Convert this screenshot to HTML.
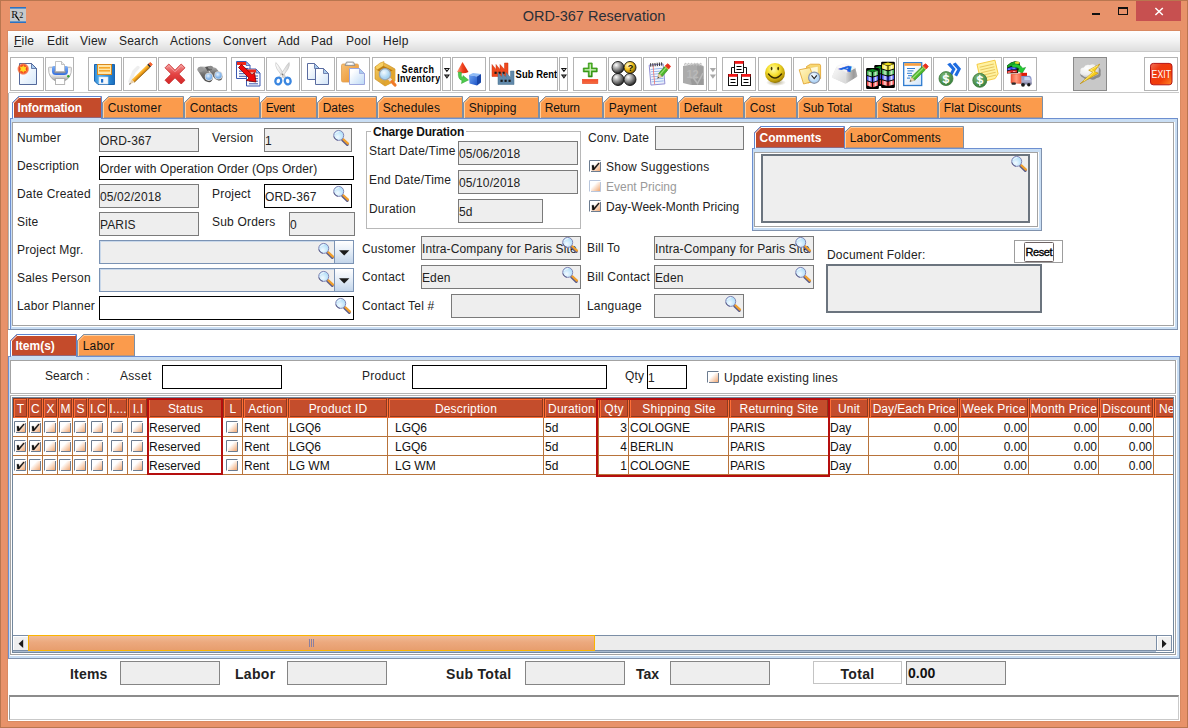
<!DOCTYPE html><html><head><meta charset="utf-8"><title>ORD-367 Reservation</title><style>
*{box-sizing:border-box;margin:0;padding:0}
html,body{width:1188px;height:728px;overflow:hidden;background:#E8926A;font-family:"Liberation Sans",sans-serif;font-size:12px;color:#222}
.a{position:absolute}
#win{position:absolute;left:0;top:0;width:1188px;height:728px;background:#E8926A;border:1px solid #B9764F}
#content{position:absolute;left:8px;top:31px;width:1172px;height:690px;background:#fff;box-shadow:0 0 0 1px #D98A62}
#title{position:absolute;left:0;top:6px;width:1188px;text-align:center;font-size:14.5px;color:#2a2f38;line-height:20px}
#menubar{position:absolute;left:8px;top:31px;width:1172px;height:21px;background:linear-gradient(#ffffff 0%,#f4f4f4 45%,#dedede 100%);border-bottom:1px solid #c9c9c9}
#menubar span{position:absolute;top:3px;font-size:12px;line-height:14px;color:#222;letter-spacing:0.22px}
.tb{position:absolute;top:57px;height:34px;background:#fff;border:1px solid #b4b4b4;overflow:hidden}
.tb svg{position:absolute;left:0;top:0}
.lbl{position:absolute;font-size:12px;line-height:14px;white-space:nowrap;color:#222;letter-spacing:0.2px}
.fd{position:absolute;height:24px;background:#eeeeee;border:1px solid #7a7a7a;font-size:12px;line-height:14px;white-space:nowrap;overflow:hidden;padding:5px 0 0 0;color:#222;letter-spacing:0.12px}
.fe{position:absolute;height:24px;background:#fff;border:1px solid #000;font-size:12px;line-height:14px;white-space:nowrap;overflow:hidden;padding:5px 0 0 0;color:#222;letter-spacing:0.12px}
.tabtxt{position:absolute;font-size:12px;line-height:14px;white-space:nowrap;letter-spacing:0.2px}
.th{position:absolute;top:0;height:20px;background:#C44D2C;color:#fff;letter-spacing:0.2px;font-size:12px;line-height:14px;text-align:center;white-space:nowrap;overflow:hidden;padding-top:3px;border:1px solid;border-color:#8E3A1E #FF6E36 #FF6E36 #8E3A1E;box-shadow:inset -1px 0 0 #8E3A1E, inset 1px 1px 0 #FF6E36, inset 0 -1px 0 #8E3A1E}
.td{position:absolute;height:19px;font-size:12px;line-height:14px;white-space:nowrap;overflow:hidden;padding:3px 0 0 1px;color:#111;border-right:1px solid #B8733A;border-bottom:1px solid #B8733A}
.tot{position:absolute;font-size:14px;font-weight:bold;line-height:16px;color:#222;white-space:nowrap}
</style></head><body>
<div id="win"></div>
<div id="content"></div>
<svg class="a" style="left:10px;top:7px" width="16" height="16"><rect width="16" height="16" fill="#c5c9cc"/><rect width="16" height="1.6" fill="#2a72c4"/><rect y="14.4" width="16" height="1.6" fill="#2a72c4"/><text x="1.2" y="11.2" font-family="Liberation Serif" font-size="10.5" fill="#111">R</text><path d="M5.6 8.6 L9.4 13.6" stroke="#111" stroke-width="1.1"/><text x="9.2" y="11.2" font-family="Liberation Serif" font-size="8" fill="#111">2</text></svg>
<div id="title">ORD-367 Reservation</div>
<div class="a" style="left:1136px;top:1px;width:45px;height:20px;background:#C75050"></div><svg class="a" style="left:1085px;top:0" width="100" height="22"><rect x="7" y="13" width="8" height="2" fill="#111"/><rect x="33.5" y="7.5" width="9" height="7" fill="none" stroke="#111" stroke-width="1"/><rect x="33" y="7" width="10" height="2" fill="#111"/><path d="M70.4 8 L77.8 15 M77.8 8 L70.4 15" stroke="#fff" stroke-width="1.5"/></svg>
<div id="menubar">
<span style="left:6px"><u>F</u>ile</span>
<span style="left:39px">Edit</span>
<span style="left:72px">View</span>
<span style="left:111px">Search</span>
<span style="left:162px">Actions</span>
<span style="left:215px">Convert</span>
<span style="left:270px">Add</span>
<span style="left:303px">Pad</span>
<span style="left:338px">Pool</span>
<span style="left:375px">Help</span>
</div>
<div class="a" style="left:9px;top:92px;width:1170px;height:1px;background:#c8c8c8"></div>
<div class="tb" style="left:10px;width:34px;background:#fff;border-color:#b4b4b4"><svg style="left:-1px;top:-1px" width="34" height="34" viewBox="0 0 34 34"><defs><linearGradient id="pgn" x1="0" y1="0" x2="1" y2="1"><stop offset="0.2" stop-color="#ffffff"/><stop offset="1" stop-color="#D6E8FA"/></linearGradient><radialGradient id="sun"><stop offset="0" stop-color="#FFF14A"/><stop offset="0.3" stop-color="#FFC21A"/><stop offset="0.55" stop-color="#F2401A"/><stop offset="0.8" stop-color="#F4561E" stop-opacity="0.75"/><stop offset="1" stop-color="#F4561E" stop-opacity="0"/></radialGradient></defs><path d="M9.5 6.5 H21.5 L26.5 11.5 V27.5 H9.5 Z" fill="url(#pgn)" stroke="#42588F" stroke-width="0.9" stroke-linejoin="round"/><path d="M21.5 6.5 V11.5 H26.5 Z" fill="#A9CCEE" stroke="#42588F" stroke-width="0.72" stroke-linejoin="round"/><circle cx="13.2" cy="12" r="6.2" fill="url(#sun)"/><path d="M13.2 7.6 L14 10.6 L16.9 9.3 L15.2 12 L16.9 14.7 L14 13.6 L13.2 16.4 L12.4 13.6 L9.5 14.7 L11.2 12 L9.5 9.3 L12.4 10.6 Z" fill="#FFD92A"/></svg></div>
<div class="tb" style="left:45px;width:29px;background:#fff;border-color:#b4b4b4"><svg style="left:-1px;top:-1px" width="29" height="34" viewBox="0 0 29 34"><defs><linearGradient id="prb" x1="0" y1="0" x2="0" y2="1"><stop offset="0" stop-color="#e9e9e9"/><stop offset="0.45" stop-color="#ffffff"/><stop offset="0.8" stop-color="#c4c4c4"/><stop offset="1" stop-color="#8c8c8c"/></linearGradient><linearGradient id="prt" x1="0" y1="0" x2="0" y2="1"><stop offset="0" stop-color="#7FB0F6"/><stop offset="1" stop-color="#2F6CE0"/></linearGradient></defs><path d="M3.6 11.6 Q3 10.4 4.6 10.2 H25.4 Q27 10.4 26.4 11.6 Q26.6 20.5 19.8 23.8 H10.2 Q3.4 20.5 3.6 11.6 Z" fill="url(#prb)" stroke="#9a9a9a" stroke-width="0.7"/><path d="M7 11 Q7 9 9 9 H21 Q23 9 23 11 V14.5 Q23 18 19 18 H11 Q7 18 7 14.5 Z" fill="url(#prt)"/><rect x="9.2" y="13.6" width="11.6" height="2.6" rx="1.2" fill="#8a90a2"/><path d="M10.5 4.5 H16.5 L19.5 7.5 V14.6 H10.5 Z" fill="#ffffff" stroke="#b4b4b4" stroke-width="0.8"/><path d="M16.5 4.5 V7.5 H19.5" fill="#ececec" stroke="#b4b4b4" stroke-width="0.8"/><rect x="10.5" y="21.6" width="9.2" height="5.8" fill="#ffffff" stroke="#a4a4a4" stroke-width="0.8"/><circle cx="23.3" cy="19.3" r="1.2" fill="#2FA22F"/></svg></div>
<div class="tb" style="left:88px;width:34px;background:#fff;border-color:#b4b4b4"><svg style="left:-1px;top:-1px" width="34" height="34" viewBox="0 0 34 34"><defs><linearGradient id="svb" x1="0" y1="0" x2="1" y2="0"><stop offset="0" stop-color="#2C8AD6"/><stop offset="0.25" stop-color="#59B2EE"/><stop offset="0.7" stop-color="#2C8AD6"/><stop offset="1" stop-color="#1A6DBC"/></linearGradient></defs><path d="M6.5 7.5 H26.5 V27.5 H10 L6.5 24 Z" fill="url(#svb)" stroke="#1B64B0" stroke-width="1" stroke-linejoin="round"/><rect x="9.5" y="7.5" width="14" height="10" fill="#FFE6A8" stroke="#D98A1E" stroke-width="1"/><rect x="11" y="10" width="11" height="1.6" fill="#F7A72A"/><rect x="11" y="13" width="11" height="1.6" fill="#F7A72A"/><rect x="11" y="20" width="9" height="7" fill="#f4f8fc" stroke="#c9dcee" stroke-width="0.6"/><rect x="13" y="22" width="2.2" height="3.6" fill="#1F6FCB"/></svg></div>
<div class="tb" style="left:123px;width:34px;background:#fff;border-color:#b4b4b4"><svg style="left:-1px;top:-1px" width="34" height="34" viewBox="0 0 34 34"><defs><linearGradient id="pcl" gradientUnits="userSpaceOnUse" x1="11.9164" y1="19.5171" x2="14.542" y2="22.2642"><stop offset="0" stop-color="#FFC84A"/><stop offset="0.5" stop-color="#F6A51E"/><stop offset="1" stop-color="#B8720A"/></linearGradient></defs><path d="M7 24.5 L11 14.5 L15 10.5" stroke="#cfcfcf" stroke-width="3.5" fill="none" opacity="0.35" stroke-linecap="round"/><path d="M8.66329 22.6263 L11.2888 25.3734 L26.8765 10.4755 L24.251 7.72837 Z" fill="url(#pcl)"/><path d="M11.2888 25.3734 L26.8765 10.4755" stroke="#8A5A08" stroke-width="0.7"/><path d="M8.66329 22.6263 L11.2888 25.3734 L6 27.8 Z" fill="#E8D0AC"/><path d="M6.96219 25.9121 L7.92949 26.9242 L6 27.8 Z" fill="#444"/><path d="M24.251 7.72837 L26.8765 10.4755 L28.1778 9.23178 L25.5522 6.48469 Z" fill="#2c2c2c"/><path d="M25.8286 6.77386 L27.9014 8.94262 L29.209 7.41617 L27.4126 5.53658 Z" fill="#F2622E" stroke="#F2622E" stroke-width="1" stroke-linejoin="round"/></svg></div>
<div class="tb" style="left:158px;width:34px;background:#fff;border-color:#b4b4b4"><svg style="left:-1px;top:-1px" width="34" height="34" viewBox="0 0 34 34"><defs><linearGradient id="dlx" x1="0" y1="0" x2="0" y2="1"><stop offset="0" stop-color="#F29A9A"/><stop offset="0.5" stop-color="#E44444"/><stop offset="1" stop-color="#D32626"/></linearGradient></defs><path d="M7 10.8 L10.8 7 L17 13.2 L23.2 7 L27 10.8 L20.8 17 L27 23.2 L23.2 27 L17 20.8 L10.8 27 L7 23.2 L13.2 17 Z" fill="url(#dlx)" stroke="#C62A2A" stroke-width="0.8" stroke-linejoin="round"/><path d="M8.6 10.8 L10.8 8.6 L17 14.8 L23.2 8.6 L25.4 10.8" fill="none" stroke="#F6B0B0" stroke-width="0.9" opacity="0.8"/></svg></div>
<div class="tb" style="left:193px;width:34px;background:#fff;border-color:#b4b4b4"><svg style="left:-1px;top:-1px" width="34" height="34" viewBox="0 0 34 34"><defs><linearGradient id="bnb" x1="0" y1="0" x2="0" y2="1"><stop offset="0" stop-color="#b8b8b8"/><stop offset="0.5" stop-color="#6e6e6e"/><stop offset="1" stop-color="#4a4a4a"/></linearGradient><radialGradient id="bnl" cx="0.4" cy="0.35"><stop offset="0" stop-color="#E6F3FF"/><stop offset="1" stop-color="#7FB2EA"/></radialGradient></defs><path d="M4.5 13 Q5 9.5 9 9.5 L13 9.8 L20 21 Q19 26 15 25 Q11 24 9.5 21 Z" fill="url(#bnb)"/><path d="M13 9.5 Q15 8.5 18 9.5 L23 11 L29.5 19 Q29.5 24 25.5 23.5 Q22 23 20.5 20 L15 12 Z" fill="url(#bnb)"/><path d="M12 10 L17 9.5 L19 13 L14.5 14 Z" fill="#555"/><ellipse cx="7.5" cy="12.3" rx="3" ry="2.6" fill="#9a9a9a"/><ellipse cx="17.5" cy="10.6" rx="2.6" ry="1.8" fill="#8a8a8a"/><circle cx="15.9" cy="19.8" r="4.1" fill="#d9d9d9"/><circle cx="15.9" cy="19.8" r="3.3" fill="url(#bnl)"/><circle cx="25.4" cy="18.4" r="4.1" fill="#d9d9d9"/><circle cx="25.4" cy="18.4" r="3.3" fill="url(#bnl)"/></svg></div>
<div class="tb" style="left:231px;width:34px;background:#fff;border-color:#b4b4b4"><svg style="left:-1px;top:-1px" width="34" height="34" viewBox="0 0 34 34"><defs><linearGradient id="ca1" x1="0" y1="0" x2="1" y2="1"><stop offset="0.2" stop-color="#ffffff"/><stop offset="1" stop-color="#F6F9FE"/></linearGradient><linearGradient id="ca2" x1="0" y1="0" x2="1" y2="1"><stop offset="0.2" stop-color="#ffffff"/><stop offset="1" stop-color="#F6F9FE"/></linearGradient></defs><path d="M5.5 4.5 H15 L19 8.5 V21.5 H5.5 Z" fill="url(#ca1)" stroke="#3D59B0" stroke-width="1" stroke-linejoin="round"/><path d="M15 4.5 V8.5 H19 Z" fill="#A9CCEE" stroke="#3D59B0" stroke-width="0.8" stroke-linejoin="round"/><rect x="6" y="5" width="9" height="3" fill="#F02818"/><rect x="8" y="11" width="9" height="1" fill="#3D59B0"/><rect x="8" y="13.6" width="9" height="1" fill="#3D59B0"/><rect x="8" y="16.2" width="9" height="1" fill="#3D59B0"/><rect x="8" y="18.8" width="9" height="1" fill="#3D59B0"/><path d="M15.5 12 H25 L29 16 V29 H15.5 Z" fill="url(#ca2)" stroke="#3D59B0" stroke-width="1" stroke-linejoin="round"/><path d="M25 12 V16 H29 Z" fill="#A9CCEE" stroke="#3D59B0" stroke-width="0.8" stroke-linejoin="round"/><rect x="16" y="12.5" width="9" height="3" fill="#F02818"/><rect x="18" y="18.5" width="9" height="1" fill="#3D59B0"/><rect x="18" y="21.1" width="9" height="1" fill="#3D59B0"/><rect x="18" y="23.7" width="9" height="1" fill="#3D59B0"/><rect x="18" y="26.3" width="9" height="1" fill="#3D59B0"/><path d="M7.5 10.5 L10.5 7.5 L21 17.5 L23.5 15.5 L25 25 L15.5 23.5 L18 21 Z" fill="#EE0A0A" stroke="#7a0000" stroke-width="0.8" stroke-linejoin="round"/></svg></div>
<div class="tb" style="left:266px;width:34px;background:#fff;border-color:#b4b4b4"><svg style="left:-1px;top:-1px" width="34" height="34" viewBox="0 0 34 34"><defs><linearGradient id="scb" x1="0" y1="0" x2="1" y2="0"><stop offset="0" stop-color="#ffffff"/><stop offset="1" stop-color="#d2d2d2"/></linearGradient></defs><path d="M9.8 5.5 Q9 8 11 12 L17.5 21 L19.5 19.5 L12 8 Q10.6 6 9.8 5.5 Z" fill="url(#scb)" stroke="#b0b0b0" stroke-width="0.5"/><path d="M23.2 5.5 Q24 8 22 12 L15.5 21 L13.5 19.5 L21 8 Q22.4 6 23.2 5.5 Z" fill="url(#scb)" stroke="#b0b0b0" stroke-width="0.5"/><circle cx="16.5" cy="17.5" r="0.9" fill="#777"/><ellipse cx="12.3" cy="24" rx="2.9" ry="3.4" fill="none" stroke="#3A86E0" stroke-width="2.3" transform="rotate(18 12.3 24)"/><ellipse cx="21.7" cy="24" rx="2.9" ry="3.4" fill="none" stroke="#3A86E0" stroke-width="2.3" transform="rotate(-18 21.7 24)"/></svg></div>
<div class="tb" style="left:301px;width:34px;background:#fff;border-color:#b4b4b4"><svg style="left:-1px;top:-1px" width="34" height="34" viewBox="0 0 34 34"><defs><linearGradient id="cp1" x1="0" y1="0" x2="1" y2="1"><stop offset="0.2" stop-color="#ffffff"/><stop offset="1" stop-color="#CFE3F7"/></linearGradient><linearGradient id="cp2" x1="0" y1="0" x2="1" y2="1"><stop offset="0.2" stop-color="#ffffff"/><stop offset="1" stop-color="#CFE3F7"/></linearGradient></defs><path d="M6.5 6.5 H13.5 L18.5 11.5 V22.5 H6.5 Z" fill="url(#cp1)" stroke="#5A6CA0" stroke-width="1" stroke-linejoin="round"/><path d="M13.5 6.5 V11.5 H18.5 Z" fill="#A9CCEE" stroke="#5A6CA0" stroke-width="0.8" stroke-linejoin="round"/><path d="M14.5 11.5 H22.5 L27.5 16.5 V27.5 H14.5 Z" fill="url(#cp2)" stroke="#5A6CA0" stroke-width="1" stroke-linejoin="round"/><path d="M22.5 11.5 V16.5 H27.5 Z" fill="#A9CCEE" stroke="#5A6CA0" stroke-width="0.8" stroke-linejoin="round"/></svg></div>
<div class="tb" style="left:336px;width:34px;background:#fff;border-color:#b4b4b4"><svg style="left:-1px;top:-1px" width="34" height="34" viewBox="0 0 34 34"><defs><linearGradient id="psb" x1="0" y1="0" x2="1" y2="1"><stop offset="0" stop-color="#F8C074"/><stop offset="1" stop-color="#E8902C"/></linearGradient><linearGradient id="ps2" x1="0" y1="0" x2="1" y2="1"><stop offset="0.2" stop-color="#ffffff"/><stop offset="1" stop-color="#BCD9F6"/></linearGradient></defs><rect x="5.5" y="7" width="17" height="18" rx="1.5" fill="url(#psb)" stroke="#E0A050" stroke-width="0.8"/><path d="M9 8.5 L10.5 5 H17.5 L19 8.5 Z" fill="#d8d8d8" stroke="#8d8d8d" stroke-width="0.8"/><rect x="11.5" y="6" width="5" height="1.6" fill="#fff"/><path d="M13.5 11.5 H23.5 L28.5 16.5 V27.5 H13.5 Z" fill="url(#ps2)" stroke="#9BA6DE" stroke-width="1" stroke-linejoin="round"/><path d="M23.5 11.5 V16.5 H28.5 Z" fill="#A9CCEE" stroke="#9BA6DE" stroke-width="0.8" stroke-linejoin="round"/></svg></div>
<div class="tb" style="left:372px;width:69px;background:#fff;border-color:#b4b4b4"><svg style="left:-1px;top:-1px" width="69" height="34" viewBox="0 0 69 34"><defs><linearGradient id="sib" x1="0" y1="0" x2="1" y2="1"><stop offset="0" stop-color="#F6CC62"/><stop offset="1" stop-color="#CE8E1A"/></linearGradient><radialGradient id="sil" cx="0.4" cy="0.35"><stop offset="0" stop-color="#F4FBFF"/><stop offset="1" stop-color="#A8D4F2"/></radialGradient></defs><path d="M3 10 L11 5.5 L17 8.5 L23 12 V24 L13 29 L3 22 Z" fill="url(#sib)" stroke="#C98A18" stroke-width="0.6"/><path d="M3 10 L8 6 L12 4.5 L11.5 9 L5 13 Z" fill="#F7CF62" stroke="#C98A18" stroke-width="0.5"/><path d="M5 13 L11.5 9 L21 13.5 L13 18 Z" fill="#B97A10"/><path d="M13 18 L23 12 V24 L13 29 Z" fill="#E2A62E"/><path d="M17.5 22 L23 28" stroke="#F07A28" stroke-width="3.2" stroke-linecap="round"/><path d="M16.8 21.3 L19 23.6" stroke="#e8e0d8" stroke-width="3"/><circle cx="13" cy="17.2" r="5.6" fill="url(#sil)" stroke="#9aa6b2" stroke-width="1.3"/><text transform="translate(29.6 16) scale(0.86 1)" font-family="Liberation Sans" font-weight="bold" font-size="10.4" fill="#000" letter-spacing="0.6">Search</text><text transform="translate(25.2 25) scale(0.86 1)" font-family="Liberation Sans" font-weight="bold" font-size="10.4" fill="#000" letter-spacing="0.4">Inventory</text></svg></div>
<div class="tb" style="left:442px;width:9px;background:#fff;border-color:#b4b4b4"><svg style="left:-1px;top:-1px" width="9" height="34" viewBox="0 0 9 34"><path d="M1.8 11 H8 L4.9 15.2 Z" fill="#111"/><path d="M1.8 17.5 H8 L4.9 21.7 Z" fill="#111"/><rect x="3.8" y="12" width="2.2" height="1" fill="#fff" opacity="0.7"/><rect x="3.8" y="18.5" width="2.2" height="1" fill="#fff" opacity="0.5"/></svg></div>
<div class="tb" style="left:452px;width:34px;background:#fff;border-color:#b4b4b4"><svg style="left:-1px;top:-1px" width="34" height="34" viewBox="0 0 34 34"><defs><linearGradient id="shc" x1="0" y1="0" x2="1" y2="0"><stop offset="0" stop-color="#FF9A7A"/><stop offset="0.5" stop-color="#F0401C"/><stop offset="1" stop-color="#C82408"/></linearGradient><linearGradient id="shq" x1="0" y1="0" x2="1" y2="1"><stop offset="0" stop-color="#6FA4F0"/><stop offset="1" stop-color="#1E55C8"/></linearGradient></defs><path d="M10.5 5 L16.5 15 Q11 17.5 5 15 Z" fill="url(#shc)"/><path d="M6.5 15 Q5.5 22 10 23.5 L9.5 26.5 L16.5 23 L11 18.5 L10.8 20.8 Q8.5 19.5 9.5 15.5 Z" fill="#4CCB4C" stroke="#2FA02F" stroke-width="0.5"/><path d="M17 18 L21 16 L29 17 L25 19.5 Z" fill="#8FBBF6"/><path d="M17 18 L25 19.5 V28.5 L17.5 26.5 Z" fill="url(#shq)"/><path d="M25 19.5 L29 17 V25.5 L25 28.5 Z" fill="#1846A8"/></svg></div>
<div class="tb" style="left:489px;width:69px;background:#fff;border-color:#b4b4b4"><svg style="left:-1px;top:-1px" width="69" height="34" viewBox="0 0 69 34"><path d="M3 19.5 V7.5 L7 12.5 V7.5 L11 12.5 V7.5 L15.5 12.5 V6 H19 V19.5 Z" fill="#F0481C" stroke="#C83010" stroke-width="0.5"/><rect x="5.5" y="14.7" width="2.2" height="2.2" fill="#1a1a1a"/><rect x="9.5" y="14.7" width="2.2" height="2.2" fill="#1a1a1a"/><rect x="13.5" y="14.7" width="2.2" height="2.2" fill="#1a1a1a"/><path d="M9 27.5 V15.5 L13 20.5 V15.5 L17 20.5 V15.5 L21.5 20.5 V14 H25 V27.5 Z" fill="#6189AA" stroke="#46708E" stroke-width="0.5"/><rect x="11.5" y="22.7" width="2.2" height="2.2" fill="#1a1a1a"/><rect x="15.5" y="22.7" width="2.2" height="2.2" fill="#1a1a1a"/><rect x="19.5" y="22.7" width="2.2" height="2.2" fill="#1a1a1a"/><text transform="translate(26.6 21) scale(0.9 1)" font-family="Liberation Sans" font-weight="bold" font-size="10.4" fill="#000" letter-spacing="0.1">Sub Rent</text></svg></div>
<div class="tb" style="left:559px;width:9px;background:#fff;border-color:#b4b4b4"><svg style="left:-1px;top:-1px" width="9" height="34" viewBox="0 0 9 34"><path d="M1.8 11 H8 L4.9 15.2 Z" fill="#111"/><path d="M1.8 17.5 H8 L4.9 21.7 Z" fill="#111"/><rect x="3.8" y="12" width="2.2" height="1" fill="#fff" opacity="0.7"/><rect x="3.8" y="18.5" width="2.2" height="1" fill="#fff" opacity="0.5"/></svg></div>
<div class="tb" style="left:573px;width:34px;background:#fff;border-color:#b4b4b4"><svg style="left:-1px;top:-1px" width="34" height="34" viewBox="0 0 34 34"><defs><linearGradient id="plg" x1="0" y1="0" x2="0" y2="1"><stop offset="0" stop-color="#5CC22C"/><stop offset="1" stop-color="#2E9410"/></linearGradient><linearGradient id="plr" x1="0" y1="0" x2="0" y2="1"><stop offset="0" stop-color="#F84A2A"/><stop offset="1" stop-color="#F07040"/></linearGradient></defs><path d="M15.3 6 H19.2 V11 H24.2 V14.9 H19.2 V19.9 H15.3 V14.9 H10.3 V11 H15.3 Z" fill="url(#plg)" stroke="#2C8A10" stroke-width="0.7"/><path d="M16.6 7.3 H17.9 V12.3 H22.9 V13.6 H17.9 V18.6 H16.6 V13.6 H11.6 V12.3 H16.6 Z" fill="#E6F7DA" opacity="0.9"/><rect x="9.3" y="22.3" width="15.6" height="4.4" fill="url(#plr)" stroke="#E83C1C" stroke-width="0.5"/></svg></div>
<div class="tb" style="left:608px;width:34px;background:#fff;border-color:#b4b4b4"><svg style="left:-1px;top:-1px" width="34" height="34" viewBox="0 0 34 34"><defs><radialGradient id="cig" cx="0.35" cy="0.3" r="0.75"><stop offset="0" stop-color="#ffffff"/><stop offset="0.45" stop-color="#9a9a9a"/><stop offset="1" stop-color="#1c1c1c"/></radialGradient><radialGradient id="ciy" cx="0.35" cy="0.3" r="0.75"><stop offset="0" stop-color="#FFFAD0"/><stop offset="0.5" stop-color="#F6C21A"/><stop offset="1" stop-color="#7A5A00"/></radialGradient></defs><circle cx="10" cy="10.5" r="6" fill="url(#cig)" stroke="#111" stroke-width="0.9"/><circle cx="22" cy="10.5" r="6" fill="url(#ciy)" stroke="#111" stroke-width="0.9"/><circle cx="10" cy="22.5" r="6" fill="url(#cig)" stroke="#111" stroke-width="0.9"/><circle cx="22" cy="22.5" r="6" fill="url(#cig)" stroke="#111" stroke-width="0.9"/><text x="19.7" y="14" font-family="Liberation Sans" font-weight="bold" font-size="9" fill="#111">?</text></svg></div>
<div class="tb" style="left:643px;width:34px;background:#fff;border-color:#b4b4b4"><svg style="left:-1px;top:-1px" width="34" height="34" viewBox="0 0 34 34"><defs><linearGradient id="npg" x1="0" y1="0" x2="1" y2="1"><stop offset="0" stop-color="#ffffff"/><stop offset="1" stop-color="#E4ECFA"/></linearGradient></defs><g transform="rotate(-5 14 17)"><rect x="7" y="7.5" width="14" height="20" fill="url(#npg)" stroke="#8A86D0" stroke-width="0.9"/><rect x="8" y="11.5" width="12" height="0.7" fill="#7FA8E8"/><rect x="8" y="14" width="12" height="0.7" fill="#7FA8E8"/><rect x="8" y="16.5" width="12" height="0.7" fill="#7FA8E8"/><rect x="8" y="19" width="12" height="0.7" fill="#7FA8E8"/><rect x="8" y="21.5" width="12" height="0.7" fill="#7FA8E8"/><rect x="8" y="24" width="12" height="0.7" fill="#7FA8E8"/><rect x="10.4" y="8" width="0.8" height="19" fill="#F07070"/><rect x="8" y="5.8" width="1" height="3.4" fill="#333"/><rect x="10.2" y="5.8" width="1" height="3.4" fill="#333"/><rect x="12.4" y="5.8" width="1" height="3.4" fill="#333"/><rect x="14.6" y="5.8" width="1" height="3.4" fill="#333"/><rect x="16.8" y="5.8" width="1" height="3.4" fill="#333"/><rect x="19" y="5.8" width="1" height="3.4" fill="#333"/></g><path d="M15.6823 16.5865 L19.1749 19.5802 L24.9923 12.7931 L21.4998 9.79946 Z" fill="#4DB82A" stroke="#2E7E14" stroke-width="0.6"/><path d="M16.973 17.6929 L22.7905 10.9058" stroke="#9CE07A" stroke-width="1.1"/><path d="M15.6823 16.5865 L19.1749 19.5802 L14.5 21.5 Z" fill="#F0D8A8" stroke="#a08050" stroke-width="0.4"/><path d="M15.1399 19.6778 L16.2029 20.5889 L14.5 21.5 Z" fill="#333"/><path d="M21.4998 9.79946 L24.9923 12.7931 L25.9034 11.7301 L22.4109 8.7365 Z" fill="#D8B040"/><path d="M22.4109 8.7365 L25.9034 11.7301 L27.4762 9.12698 L24.7429 6.78413 Z" fill="#E8301C" stroke="#E8301C" stroke-width="0.9" stroke-linejoin="round"/></svg></div>
<div class="tb" style="left:678px;width:29px;background:#fff;border-color:#b4b4b4"><svg style="left:-1px;top:-1px" width="29" height="34" viewBox="0 0 29 34"><path d="M5 9 L19 6.5 L25.5 9 V28 H13 L5 26 Z" fill="#ababab"/><path d="M19 9 L25.5 9.5 V28 H19 Z" fill="#a0a0a0"/><path d="M12.5 22 H25.5 V28 H14 Z" fill="#9a9a9a"/><path d="M6.5 8.5 Q7 5 8.5 7.5" fill="none" stroke="#c4c4c4" stroke-width="1.2"/><path d="M9.5 8.5 Q10 5 11.5 7.5" fill="none" stroke="#c4c4c4" stroke-width="1.2"/><path d="M12.5 8.5 Q13 5 14.5 7.5" fill="none" stroke="#c4c4c4" stroke-width="1.2"/><path d="M15.5 8.5 Q16 5 17.5 7.5" fill="none" stroke="#c4c4c4" stroke-width="1.2"/><path d="M18.5 8.5 Q19 5 20.5 7.5" fill="none" stroke="#c4c4c4" stroke-width="1.2"/><path d="M21.5 8.5 Q22 5 23.5 7.5" fill="none" stroke="#c4c4c4" stroke-width="1.2"/><text x="8.5" y="21" font-family="Liberation Sans" font-weight="bold" font-size="11" fill="#b9b9b9">12</text><path d="M15.5 21 L19.5 26.5 L25 16" fill="none" stroke="#b9b9b9" stroke-width="1.6"/></svg></div>
<div class="tb" style="left:708px;width:9px;background:#fff;border-color:#b4b4b4"><svg style="left:-1px;top:-1px" width="9" height="34" viewBox="0 0 9 34"><path d="M1.8 11 H8 L4.9 15.2 Z" fill="#a9a9a9"/><path d="M1.8 17.5 H8 L4.9 21.7 Z" fill="#a9a9a9"/></svg></div>
<div class="tb" style="left:722px;width:34px;background:#fff;border-color:#b4b4b4"><svg style="left:-1px;top:-1px" width="34" height="34" viewBox="0 0 34 34"><path d="M12.5 10.5 H9.5 V18 M21.5 10.5 H24.5 V18" fill="none" stroke="#111" stroke-width="1"/><rect x="12.5" y="4.5" width="9" height="11" fill="#fff" stroke="#111" stroke-width="1"/><rect x="12.5" y="4" width="9" height="2.8" fill="#F01818"/><rect x="14.5" y="9" width="5" height="1" fill="#000"/><rect x="14.5" y="12" width="5" height="1" fill="#000"/><rect x="6.5" y="17.5" width="9" height="11" fill="#fff" stroke="#111" stroke-width="1"/><rect x="6.5" y="17" width="9" height="2.8" fill="#F01818"/><rect x="8.5" y="22" width="5" height="1" fill="#000"/><rect x="8.5" y="25" width="5" height="1" fill="#000"/><rect x="19.5" y="17.5" width="9" height="11" fill="#fff" stroke="#111" stroke-width="1"/><rect x="19.5" y="17" width="9" height="2.8" fill="#F01818"/><rect x="21.5" y="22" width="5" height="1" fill="#000"/><rect x="21.5" y="25" width="5" height="1" fill="#000"/></svg></div>
<div class="tb" style="left:758px;width:34px;background:#fff;border-color:#b4b4b4"><svg style="left:-1px;top:-1px" width="34" height="34" viewBox="0 0 34 34"><defs><radialGradient id="smg" cx="0.42" cy="0.32" r="0.75"><stop offset="0" stop-color="#FFFDB0"/><stop offset="0.4" stop-color="#F6E030"/><stop offset="0.78" stop-color="#BC9A08"/><stop offset="1" stop-color="#6E5800"/></radialGradient><radialGradient id="smsh"><stop offset="0" stop-color="#6a5a20" stop-opacity="0.55"/><stop offset="1" stop-color="#6a5a20" stop-opacity="0"/></radialGradient></defs><ellipse cx="18" cy="25.5" rx="10" ry="3.5" fill="url(#smsh)"/><circle cx="17" cy="16" r="10" fill="url(#smg)"/><ellipse cx="13.6" cy="11.6" rx="0.9" ry="1.8" fill="#4a3c00"/><ellipse cx="20.2" cy="11.6" rx="0.9" ry="1.8" fill="#4a3c00"/><path d="M10.5 17 Q17 25 23.5 17" fill="none" stroke="#3a2e00" stroke-width="1.5" stroke-linecap="round"/></svg></div>
<div class="tb" style="left:793px;width:34px;background:#fff;border-color:#b4b4b4"><svg style="left:-1px;top:-1px" width="34" height="34" viewBox="0 0 34 34"><defs><linearGradient id="fog" x1="0" y1="0" x2="1" y2="1"><stop offset="0" stop-color="#FFF8CC"/><stop offset="1" stop-color="#F8D464"/></linearGradient><radialGradient id="fcl" cx="0.4" cy="0.35"><stop offset="0" stop-color="#ffffff"/><stop offset="1" stop-color="#B4D6F6"/></radialGradient></defs><path d="M13.5 9.5 L17.5 7.2 H26 Q27.6 7.2 27.6 8.8 V21.5 L15 26 Z" fill="#F8D870" stroke="#E0A028" stroke-width="0.8"/><path d="M12.5 11.5 L25.2 9.2 V22.5 L14 26 Z" fill="#FFF9D8" stroke="#EAC458" stroke-width="0.5"/><path d="M6.2 12.8 L16 10.8 Q17 10.7 17.3 11.6 L21.6 24 L10.6 27 Z" fill="url(#fog)" stroke="#E0A028" stroke-width="0.8"/><circle cx="21.2" cy="20.7" r="5.6" fill="url(#fcl)" stroke="#8a94a8" stroke-width="1.2"/><path d="M18.5 18.3 L21.2 21.6 L23.8 18.3" fill="none" stroke="#222" stroke-width="1.1"/></svg></div>
<div class="tb" style="left:828px;width:34px;background:#fff;border-color:#b4b4b4"><svg style="left:-1px;top:-1px" width="34" height="34" viewBox="0 0 34 34"><defs><linearGradient id="kyt" x1="0" y1="0" x2="1" y2="1"><stop offset="0" stop-color="#ffffff"/><stop offset="1" stop-color="#f0f0f0"/></linearGradient><linearGradient id="kyl" x1="0" y1="0" x2="1" y2="1"><stop offset="0" stop-color="#fbfbfb"/><stop offset="1" stop-color="#d6d6d6"/></linearGradient><linearGradient id="kyr" x1="0" y1="0" x2="1" y2="0"><stop offset="0" stop-color="#dcdcdc"/><stop offset="0.7" stop-color="#9a9a9a"/><stop offset="1" stop-color="#b4b4b4"/></linearGradient></defs><path d="M8.3 10.2 L4.2 19.3 Q4 20.3 5 20.9 L16.4 26.3 Q17.4 26.8 18.4 26.3 L28.6 20 Q29.6 19.3 29.2 18.4 L27.3 10.9 Z" fill="#e0e0e0"/><path d="M8.3 10.2 L18.6 15.5 L17.4 26.6 L5 20.9 Q4 20.3 4.2 19.3 Z" fill="url(#kyl)"/><path d="M18.6 15.5 L27.3 10.9 L29.2 18.4 Q29.6 19.3 28.6 20 L18.4 26.3 Q17.9 26.6 17.4 26.6 Z" fill="url(#kyr)"/><path d="M8.3 10.2 Q8.6 9.6 9.4 9.2 L15 7 Q16 6.7 17 7 L26.4 10.1 Q27.2 10.4 27.3 10.9 L18.6 15.5 Z" fill="url(#kyt)" stroke="#ececec" stroke-width="0.5"/><g transform="translate(16.3 13.4) rotate(14) skewX(-38) scale(1.7 0.78)"><text x="0" y="0" text-anchor="middle" font-family="Liberation Sans" font-weight="bold" font-size="10" fill="#1560E0" stroke="#1560E0" stroke-width="0.5">A</text></g></svg></div>
<div class="tb" style="left:863px;width:34px;background:#fff;border-color:#b4b4b4"><svg style="left:-1px;top:-1px" width="34" height="34" viewBox="0 0 34 34"><defs><linearGradient id="cm0" x1="0" y1="0" x2="1" y2="0"><stop offset="0" stop-color="#22A03A"/><stop offset="0.55" stop-color="#C8F0C8"/><stop offset="1" stop-color="#22A03A"/></linearGradient><linearGradient id="cm1" x1="0" y1="0" x2="1" y2="0"><stop offset="0" stop-color="#2A38E8"/><stop offset="0.55" stop-color="#D8DCFF"/><stop offset="1" stop-color="#2A38E8"/></linearGradient><linearGradient id="cm2" x1="0" y1="0" x2="1" y2="0"><stop offset="0" stop-color="#F02A2A"/><stop offset="0.55" stop-color="#FFD8D8"/><stop offset="1" stop-color="#F02A2A"/></linearGradient><linearGradient id="cl0" x1="0" y1="0" x2="1" y2="0"><stop offset="0" stop-color="#22A03A"/><stop offset="0.55" stop-color="#C8F0C8"/><stop offset="1" stop-color="#22A03A"/></linearGradient><linearGradient id="cl1" x1="0" y1="0" x2="1" y2="0"><stop offset="0" stop-color="#2A38E8"/><stop offset="0.55" stop-color="#D8DCFF"/><stop offset="1" stop-color="#2A38E8"/></linearGradient><linearGradient id="cl2" x1="0" y1="0" x2="1" y2="0"><stop offset="0" stop-color="#F02A2A"/><stop offset="0.55" stop-color="#FFD8D8"/><stop offset="1" stop-color="#F02A2A"/></linearGradient><linearGradient id="cr0" x1="0" y1="0" x2="1" y2="0"><stop offset="0" stop-color="#F0E020"/><stop offset="0.55" stop-color="#FFFBC0"/><stop offset="1" stop-color="#F0E020"/></linearGradient><linearGradient id="cr1" x1="0" y1="0" x2="1" y2="0"><stop offset="0" stop-color="#22A03A"/><stop offset="0.55" stop-color="#C8F0C8"/><stop offset="1" stop-color="#22A03A"/></linearGradient><linearGradient id="cr2" x1="0" y1="0" x2="1" y2="0"><stop offset="0" stop-color="#2A38E8"/><stop offset="0.55" stop-color="#D8DCFF"/><stop offset="1" stop-color="#2A38E8"/></linearGradient><linearGradient id="cr3" x1="0" y1="0" x2="1" y2="0"><stop offset="0" stop-color="#F02A2A"/><stop offset="0.55" stop-color="#FFD8D8"/><stop offset="1" stop-color="#F02A2A"/></linearGradient></defs><rect x="11.3" y="8.1" width="10.8" height="20.9" rx="1.2" fill="#000"/><path d="M12.2 10.4 L16.7 9 L21.2 10.4 L16.7 12 Z" fill="#0A8A1E"/><path d="M12.2 10.7 L16.25 12.3 V16.6 L12.2 15 Z" fill="url(#cm0)"/><path d="M17.15 12.3 L21.2 10.7 V15 L17.15 16.6 Z" fill="url(#cm0)"/><path d="M12.2 16 L16.25 17.6 V21.9 L12.2 20.3 Z" fill="url(#cm1)"/><path d="M17.15 17.6 L21.2 16 V20.3 L17.15 21.9 Z" fill="url(#cm1)"/><path d="M12.2 21.3 L16.25 22.9 V27.2 L12.2 25.6 Z" fill="url(#cm2)"/><path d="M17.15 22.9 L21.2 21.3 V25.6 L17.15 27.2 Z" fill="url(#cm2)"/><rect x="3.1" y="11.1" width="12.8" height="20.9" rx="1.2" fill="#000"/><path d="M4 13.4 L9.5 12 L15 13.4 L9.5 15 Z" fill="#0A8A1E"/><path d="M4 13.7 L9.05 15.3 V19.6 L4 18 Z" fill="url(#cl0)"/><path d="M9.95 15.3 L15 13.7 V18 L9.95 19.6 Z" fill="url(#cl0)"/><path d="M4 19 L9.05 20.6 V24.9 L4 23.3 Z" fill="url(#cl1)"/><path d="M9.95 20.6 L15 19 V23.3 L9.95 24.9 Z" fill="url(#cl1)"/><path d="M4 24.3 L9.05 25.9 V30.2 L4 28.6 Z" fill="url(#cl2)"/><path d="M9.95 25.9 L15 24.3 V28.6 L9.95 30.2 Z" fill="url(#cl2)"/><rect x="18.1" y="4.7" width="13.8" height="26.2" rx="1.2" fill="#000"/><path d="M19 7 L25 5.6 L31 7 L25 8.6 Z" fill="#E8D818"/><path d="M19 7.3 L24.55 8.9 V13.2 L19 11.6 Z" fill="url(#cr0)"/><path d="M25.45 8.9 L31 7.3 V11.6 L25.45 13.2 Z" fill="url(#cr0)"/><path d="M19 12.6 L24.55 14.2 V18.5 L19 16.9 Z" fill="url(#cr1)"/><path d="M25.45 14.2 L31 12.6 V16.9 L25.45 18.5 Z" fill="url(#cr1)"/><path d="M19 17.9 L24.55 19.5 V23.8 L19 22.2 Z" fill="url(#cr2)"/><path d="M25.45 19.5 L31 17.9 V22.2 L25.45 23.8 Z" fill="url(#cr2)"/><path d="M19 23.2 L24.55 24.8 V29.1 L19 27.5 Z" fill="url(#cr3)"/><path d="M25.45 24.8 L31 23.2 V27.5 L25.45 29.1 Z" fill="url(#cr3)"/></svg></div>
<div class="tb" style="left:898px;width:34px;background:#fff;border-color:#b4b4b4"><svg style="left:-1px;top:-1px" width="34" height="34" viewBox="0 0 34 34"><defs><linearGradient id="edg" x1="0" y1="0" x2="1" y2="1"><stop offset="0.3" stop-color="#ffffff"/><stop offset="1" stop-color="#D2E4F8"/></linearGradient></defs><rect x="5.7" y="5.7" width="18" height="22.8" fill="url(#edg)" stroke="#2F7CD0" stroke-width="1.3"/><rect x="6.3" y="6.2" width="16.8" height="2.6" fill="#F8A040"/><rect x="9" y="11" width="8" height="1" fill="#2F7CD0"/><rect x="9.5" y="13.4" width="6" height="1" fill="#2F7CD0"/><rect x="9" y="15.8" width="5" height="1" fill="#2F7CD0"/><rect x="10" y="18.2" width="4" height="1" fill="#2F7CD0"/><rect x="9" y="20.6" width="3" height="1" fill="#2F7CD0"/><path d="M13.4248 20.0146 L16.6302 23.3138 L27.4166 12.8338 L24.2111 9.53462 Z" fill="#4DB82A" stroke="#2E7E14" stroke-width="0.6"/><path d="M14.6094 21.2339 L25.3958 10.7539" stroke="#9CE07A" stroke-width="1.1"/><path d="M13.4248 20.0146 L16.6302 23.3138 L11.8 24.8 Z" fill="#F0D8A8" stroke="#a08050" stroke-width="0.4"/><path d="M12.6032 23.0436 L13.5788 24.0477 L11.8 24.8 Z" fill="#333"/><path d="M24.2111 9.53462 L27.4166 12.8338 L28.4207 11.8583 L25.2153 8.55904 Z" fill="#D8B040"/><path d="M25.2153 8.55904 L28.4207 11.8583 L30.224 9.40911 L27.7153 6.82711 Z" fill="#E8301C" stroke="#E8301C" stroke-width="0.9" stroke-linejoin="round"/></svg></div>
<div class="tb" style="left:933px;width:34px;background:#fff;border-color:#b4b4b4"><svg style="left:-1px;top:-1px" width="34" height="34" viewBox="0 0 34 34"><defs><radialGradient id="dl1" cx="0.4" cy="0.3" r="0.8"><stop offset="0" stop-color="#7FB87A"/><stop offset="1" stop-color="#2F7A34"/></radialGradient></defs><path d="M14.2 7.2 L17.2 5.8 L22.6 12 L18.6 19.6 L15.8 18.2 L19 12.4 Z" fill="#1E6CE0"/><path d="M19.6 7 L22.6 5.6 L28 11.8 L24 19.4 L21.2 18 L24.4 12.2 Z" fill="#1E6CE0"/><circle cx="13" cy="21.6" r="7" fill="url(#dl1)" stroke="#3C7A3C" stroke-width="0.8"/><text x="13" y="25.6" font-family="Liberation Sans" font-weight="bold" font-size="11" fill="#fff" text-anchor="middle">S</text><rect x="12.35" y="16.1" width="1.3" height="11" fill="#fff"/></svg></div>
<div class="tb" style="left:968px;width:34px;background:#fff;border-color:#b4b4b4"><svg style="left:-1px;top:-1px" width="34" height="34" viewBox="0 0 34 34"><defs><radialGradient id="dl2" cx="0.4" cy="0.3" r="0.8"><stop offset="0" stop-color="#7FB87A"/><stop offset="1" stop-color="#2F7A34"/></radialGradient></defs><g transform="rotate(-13 20 13)"><path d="M10.5 5 H29 V19 L25 23 H10.5 Z" fill="#FFF2A0" stroke="#F4C430" stroke-width="0.8"/><rect x="12.5" y="8" width="14.5" height="1" fill="#E8C860"/><rect x="12.5" y="10.8" width="14.5" height="1" fill="#E8C860"/><rect x="12.5" y="13.6" width="14.5" height="1" fill="#E8C860"/><rect x="12.5" y="16.4" width="14.5" height="1" fill="#E8C860"/><rect x="12.5" y="19.2" width="14.5" height="1" fill="#E8C860"/></g><circle cx="11.8" cy="23.3" r="7" fill="url(#dl2)" stroke="#3C7A3C" stroke-width="0.8"/><text x="11.8" y="27.3" font-family="Liberation Sans" font-weight="bold" font-size="11" fill="#fff" text-anchor="middle">S</text><rect x="11.15" y="17.8" width="1.3" height="11" fill="#fff"/></svg></div>
<div class="tb" style="left:1003px;width:34px;background:#fff;border-color:#b4b4b4"><svg style="left:-1px;top:-1px" width="34" height="34" viewBox="0 0 34 34"><defs><linearGradient id="trb" x1="0" y1="0" x2="1" y2="0"><stop offset="0" stop-color="#F4583A"/><stop offset="0.5" stop-color="#FF9C80"/><stop offset="1" stop-color="#F0583A"/></linearGradient><linearGradient id="trc" x1="0" y1="0" x2="0" y2="1"><stop offset="0" stop-color="#7C8CC8"/><stop offset="0.6" stop-color="#B4B4D0"/><stop offset="1" stop-color="#6A6E90"/></linearGradient></defs><path d="M4 8.5 L8 5.5 L12 4.2 L16.5 5 L17 8 L15 16 L4 16.5 Z" fill="#0c1a0c"/><path d="M4.2 8.6 L8 5.8 L12 4.6 L16 5.6 L13 8.6 L8 9 L4.2 10.8 Z" fill="#18A428"/><ellipse cx="14.2" cy="5.8" rx="2.4" ry="1.2" fill="#E8DC30"/><path d="M4.2 11.4 L8 10 L13.5 10 V12.4 L8 12.6 L4.2 13.6 Z" fill="#2A3CE8"/><path d="M5 11.8 H7.5 V12.6 H5 Z M9.5 10.8 H12 V11.6 H9.5 Z" fill="#B8C0FF"/><path d="M4.2 14.2 L8 13.3 L14 13.2 V15.4 L8 15.6 L4.2 16.2 Z" fill="#E82424"/><path d="M5 14.8 H7.5 V15.5 H5 Z M10 14 H12.5 V14.8 H10 Z" fill="#FFC0C0"/><path d="M8.5 8.2 Q14 5.5 18 9.2 L19.6 11.2 L22.6 10.4 L19.2 16.2 L14.6 13.8 L16.8 12.6 Q14 9.6 9.5 10.2 Z" fill="#22C832" stroke="#128A1C" stroke-width="0.5"/><path d="M17.5 15.8 H24 V19 H17.5 Z" fill="#E01A0A"/><path d="M8 17.2 L18.6 16.6 V26.4 L8 26 Z" fill="url(#trb)" stroke="#D84428" stroke-width="0.5"/><path d="M18.4 19 L26.6 18.8 Q28.6 19.6 28.8 22.6 V27.6 H18.4 Z" fill="url(#trc)"/><path d="M21.4 20 L26.4 19.9 L27.6 23 H21.4 Z" fill="#C4D4F4"/><path d="M18.9 20 H20.8 V23.4 H18.9 Z" fill="#9aa2c8"/><rect x="8.5" y="25.6" width="4.4" height="2.2" rx="1" fill="#2a2a2a"/><circle cx="20" cy="27.8" r="1.9" fill="#1a1a1a"/><circle cx="25.8" cy="27.8" r="1.7" fill="#1a1a1a"/></svg></div>
<div class="tb" style="left:1073px;width:34px;background:#c8c8c8;border-color:#8a8a8a"><svg style="left:-1px;top:-1px" width="34" height="34" viewBox="0 0 34 34"><defs><radialGradient id="lcl" cx="0.35" cy="0.3" r="0.9"><stop offset="0" stop-color="#ffffff"/><stop offset="0.55" stop-color="#ececec"/><stop offset="1" stop-color="#9a9a9a"/></radialGradient></defs><path d="M10 20.5 Q6.5 19.5 7.5 15.8 Q7 12 11 11.5 Q12.5 7.5 17.5 8.8 Q21.5 6.5 24.5 10 Q28.5 10.8 27.6 15.5 Q28.6 20.5 23.6 21 Q20.6 23.8 17 21.8 Q13 23.6 10 20.5 Z" fill="#8a8a8a"/><path d="M9.5 18.5 Q6.3 17.5 7.3 14 Q7 10.8 10.8 10.4 Q12.3 6.8 17 8 Q20.6 5.8 23.2 9.2 Q26.8 9.8 25.8 14 Q26.8 18.4 22.2 18.8 Q19.6 21.4 16.2 19.8 Q12.4 21.6 9.5 18.5 Z" fill="url(#lcl)"/><path d="M26.8 7.1 L15.7 13.2 L19.7 15.2 L7.1 26.8 L25.3 16.2 L21.5 14.4 Z" fill="#F8CE1C" stroke="#B88A08" stroke-width="0.6" stroke-linejoin="round"/><path d="M25 8.6 L17.4 13 L21 14.9 L11 24" fill="none" stroke="#FFF08A" stroke-width="0.8"/></svg></div>
<div class="tb" style="left:1144px;width:34px;background:#fff;border-color:#b4b4b4"><svg style="left:-1px;top:-1px" width="34" height="34" viewBox="0 0 34 34"><defs><linearGradient id="exg" x1="0" y1="0" x2="1" y2="1"><stop offset="0" stop-color="#F2745A"/><stop offset="0.3" stop-color="#EE3A12"/><stop offset="0.65" stop-color="#F23C08"/><stop offset="1" stop-color="#FF8A28"/></linearGradient></defs><rect x="6.5" y="6.4" width="21.5" height="21.4" rx="2.8" fill="url(#exg)" stroke="#B41414" stroke-width="1"/><text x="7.6" y="21" font-family="Liberation Sans" font-size="10.2" fill="#fff" textLength="19.4" lengthAdjust="spacingAndGlyphs">EXIT</text></svg></div>
<svg class="a" style="left:938px;top:96px" width="105" height="22"><polygon points="0.5,22 0.5,6.5 6.5,0.5 104.5,0.5 104.5,22" fill="#FB9B4C" stroke="#7B8FA6" stroke-width="1"/><polyline points="1.5,22 1.5,7 7,1.5 103.5,1.5" fill="none" stroke="#FFD0A0" stroke-width="1"/></svg>
<div class="tabtxt" style="left:943.7px;top:101px;color:#111;letter-spacing:0.12px">Flat Discounts</div>
<svg class="a" style="left:876px;top:96px" width="62" height="22"><polygon points="0.5,22 0.5,6.5 6.5,0.5 61.5,0.5 61.5,22" fill="#FB9B4C" stroke="#7B8FA6" stroke-width="1"/><polyline points="1.5,22 1.5,7 7,1.5 60.5,1.5" fill="none" stroke="#FFD0A0" stroke-width="1"/></svg>
<div class="tabtxt" style="left:881.7px;top:101px;color:#111;letter-spacing:-0.14px">Status</div>
<svg class="a" style="left:797px;top:96px" width="79" height="22"><polygon points="0.5,22 0.5,6.5 6.5,0.5 78.5,0.5 78.5,22" fill="#FB9B4C" stroke="#7B8FA6" stroke-width="1"/><polyline points="1.5,22 1.5,7 7,1.5 77.5,1.5" fill="none" stroke="#FFD0A0" stroke-width="1"/></svg>
<div class="tabtxt" style="left:802.7px;top:101px;color:#111;letter-spacing:-0.04px">Sub Total</div>
<svg class="a" style="left:744px;top:96px" width="53" height="22"><polygon points="0.5,22 0.5,6.5 6.5,0.5 52.5,0.5 52.5,22" fill="#FB9B4C" stroke="#7B8FA6" stroke-width="1"/><polyline points="1.5,22 1.5,7 7,1.5 51.5,1.5" fill="none" stroke="#FFD0A0" stroke-width="1"/></svg>
<div class="tabtxt" style="left:749.7px;top:101px;color:#111;letter-spacing:0.2px">Cost</div>
<svg class="a" style="left:678px;top:96px" width="66" height="22"><polygon points="0.5,22 0.5,6.5 6.5,0.5 65.5,0.5 65.5,22" fill="#FB9B4C" stroke="#7B8FA6" stroke-width="1"/><polyline points="1.5,22 1.5,7 7,1.5 64.5,1.5" fill="none" stroke="#FFD0A0" stroke-width="1"/></svg>
<div class="tabtxt" style="left:683.7px;top:101px;color:#111;letter-spacing:0.05px">Default</div>
<svg class="a" style="left:603px;top:96px" width="75" height="22"><polygon points="0.5,22 0.5,6.5 6.5,0.5 74.5,0.5 74.5,22" fill="#FB9B4C" stroke="#7B8FA6" stroke-width="1"/><polyline points="1.5,22 1.5,7 7,1.5 73.5,1.5" fill="none" stroke="#FFD0A0" stroke-width="1"/></svg>
<div class="tabtxt" style="left:608.7px;top:101px;color:#111;letter-spacing:0.07px">Payment</div>
<svg class="a" style="left:539px;top:96px" width="64" height="22"><polygon points="0.5,22 0.5,6.5 6.5,0.5 63.5,0.5 63.5,22" fill="#FB9B4C" stroke="#7B8FA6" stroke-width="1"/><polyline points="1.5,22 1.5,7 7,1.5 62.5,1.5" fill="none" stroke="#FFD0A0" stroke-width="1"/></svg>
<div class="tabtxt" style="left:544.7px;top:101px;color:#111;letter-spacing:-0.14px">Return</div>
<svg class="a" style="left:463px;top:96px" width="76" height="22"><polygon points="0.5,22 0.5,6.5 6.5,0.5 75.5,0.5 75.5,22" fill="#FB9B4C" stroke="#7B8FA6" stroke-width="1"/><polyline points="1.5,22 1.5,7 7,1.5 74.5,1.5" fill="none" stroke="#FFD0A0" stroke-width="1"/></svg>
<div class="tabtxt" style="left:468.7px;top:101px;color:#111;letter-spacing:0.14px">Shipping</div>
<svg class="a" style="left:377px;top:96px" width="86" height="22"><polygon points="0.5,22 0.5,6.5 6.5,0.5 85.5,0.5 85.5,22" fill="#FB9B4C" stroke="#7B8FA6" stroke-width="1"/><polyline points="1.5,22 1.5,7 7,1.5 84.5,1.5" fill="none" stroke="#FFD0A0" stroke-width="1"/></svg>
<div class="tabtxt" style="left:382.7px;top:101px;color:#111;letter-spacing:0.15px">Schedules</div>
<svg class="a" style="left:317px;top:96px" width="60" height="22"><polygon points="0.5,22 0.5,6.5 6.5,0.5 59.5,0.5 59.5,22" fill="#FB9B4C" stroke="#7B8FA6" stroke-width="1"/><polyline points="1.5,22 1.5,7 7,1.5 58.5,1.5" fill="none" stroke="#FFD0A0" stroke-width="1"/></svg>
<div class="tabtxt" style="left:322.7px;top:101px;color:#111;letter-spacing:0px">Dates</div>
<svg class="a" style="left:260px;top:96px" width="57" height="22"><polygon points="0.5,22 0.5,6.5 6.5,0.5 56.5,0.5 56.5,22" fill="#FB9B4C" stroke="#7B8FA6" stroke-width="1"/><polyline points="1.5,22 1.5,7 7,1.5 55.5,1.5" fill="none" stroke="#FFD0A0" stroke-width="1"/></svg>
<div class="tabtxt" style="left:265.7px;top:101px;color:#111;letter-spacing:-0.37px">Event</div>
<svg class="a" style="left:184px;top:96px" width="76" height="22"><polygon points="0.5,22 0.5,6.5 6.5,0.5 75.5,0.5 75.5,22" fill="#FB9B4C" stroke="#7B8FA6" stroke-width="1"/><polyline points="1.5,22 1.5,7 7,1.5 74.5,1.5" fill="none" stroke="#FFD0A0" stroke-width="1"/></svg>
<div class="tabtxt" style="left:189.7px;top:101px;color:#111;letter-spacing:0.06px">Contacts</div>
<svg class="a" style="left:102px;top:96px" width="82" height="22"><polygon points="0.5,22 0.5,6.5 6.5,0.5 81.5,0.5 81.5,22" fill="#FB9B4C" stroke="#7B8FA6" stroke-width="1"/><polyline points="1.5,22 1.5,7 7,1.5 80.5,1.5" fill="none" stroke="#FFD0A0" stroke-width="1"/></svg>
<div class="tabtxt" style="left:107.7px;top:101px;color:#111;letter-spacing:0.25px">Customer</div>
<svg class="a" style="left:12px;top:96px" width="90" height="22"><polygon points="0.5,22 0.5,6.5 6.5,0.5 89.5,0.5 89.5,22" fill="#C44B2B" stroke="#5F86CF" stroke-width="1"/><polyline points="1.5,22 1.5,7 7,1.5 88.5,1.5" fill="none" stroke="#ffffff" stroke-width="1"/></svg>
<div class="tabtxt" style="left:17.5px;top:101px;color:#fff;font-weight:bold;letter-spacing:-0.15px">Information</div>
<div class="a" style="left:8px;top:93px;width:1px;height:237px;background:#b4b4b4"></div>
<div class="a" style="left:8px;top:329px;width:3px;height:1px;background:#8092AD"></div>
<div class="a" style="left:10px;top:118px;width:1168px;height:212px;background:#C9DEF4;border-left:1px solid #6D8FD0;border-top:1px solid #6D8FD0;border-right:1px solid #8092AD;border-bottom:1px solid #8092AD"></div>
<div class="a" style="left:12px;top:122px;width:1163px;height:205px;background:#fff"></div>
<div class="a" style="left:12px;top:122px;width:1162px;height:204px;border:1px solid #a3a3a3;background:#fff"></div>
<div class="a" style="left:13px;top:118px;width:88px;height:1px;background:#C9DEF4"></div>
<div class="lbl" style="left:17px;top:131px;">Number</div>
<div class="lbl" style="left:17px;top:159px;">Description</div>
<div class="lbl" style="left:17px;top:187px;">Date Created</div>
<div class="lbl" style="left:17px;top:215px;">Site</div>
<div class="lbl" style="left:17px;top:243px;">Project Mgr.</div>
<div class="lbl" style="left:17px;top:271px;">Sales Person</div>
<div class="lbl" style="left:17px;top:299px;">Labor Planner</div>
<div class="fd" style="left:99px;top:128px;width:100px;height:24px">ORD-367</div>
<div class="lbl" style="left:212px;top:131px;">Version</div>
<div class="fd" style="left:264px;top:128px;width:88px;height:24px">1</div>
<svg class="a" style="left:332px;top:129px" width="18" height="18" viewBox="0 0 18 18"><defs><radialGradient id="mgl" cx="0.4" cy="0.65" r="0.7"><stop offset="0" stop-color="#F2FAFF"/><stop offset="1" stop-color="#A6DAF8"/></radialGradient></defs><path d="M10.6 10.9 L15.3 15.4" stroke="#5E5E88" stroke-width="3" stroke-linecap="round"/><path d="M11.3 10.3 L16 14.6" stroke="#F2A02C" stroke-width="2.2" stroke-linecap="round"/><circle cx="6.7" cy="6.4" r="5" fill="url(#mgl)" stroke="#8486B4" stroke-width="1"/><path d="M1.9 7.6 Q2.6 10.6 5.8 11.3" fill="none" stroke="#4E4E7A" stroke-width="1" opacity="0.8"/><path d="M3.4 4.8 Q4.6 2.6 7.4 2.5" fill="none" stroke="#ffffff" stroke-width="0.9" opacity="0.9"/></svg>
<div class="fe" style="left:99px;top:156px;width:255px;height:24px">Order with Operation Order (Ops Order)</div>
<div class="fd" style="left:99px;top:184px;width:100px;height:24px">05/02/2018</div>
<div class="lbl" style="left:212px;top:187px;">Project</div>
<div class="fe" style="left:264px;top:184px;width:88px;height:24px">ORD-367</div>
<svg class="a" style="left:332px;top:185px" width="18" height="18" viewBox="0 0 18 18"><defs><radialGradient id="mgl" cx="0.4" cy="0.65" r="0.7"><stop offset="0" stop-color="#F2FAFF"/><stop offset="1" stop-color="#A6DAF8"/></radialGradient></defs><path d="M10.6 10.9 L15.3 15.4" stroke="#5E5E88" stroke-width="3" stroke-linecap="round"/><path d="M11.3 10.3 L16 14.6" stroke="#F2A02C" stroke-width="2.2" stroke-linecap="round"/><circle cx="6.7" cy="6.4" r="5" fill="url(#mgl)" stroke="#8486B4" stroke-width="1"/><path d="M1.9 7.6 Q2.6 10.6 5.8 11.3" fill="none" stroke="#4E4E7A" stroke-width="1" opacity="0.8"/><path d="M3.4 4.8 Q4.6 2.6 7.4 2.5" fill="none" stroke="#ffffff" stroke-width="0.9" opacity="0.9"/></svg>
<div class="fd" style="left:99px;top:212px;width:100px;height:24px">PARIS</div>
<div class="lbl" style="left:212px;top:215px;">Sub Orders</div>
<div class="fd" style="left:289px;top:212px;width:66px;height:24px">0</div>
<div class="a" style="left:99px;top:240px;width:255px;height:24px;background:#eeeeee;border:1px solid #7B93B4;box-shadow:inset 1px 1px 0 0 #c9d8ea"></div>
<svg class="a" style="left:317px;top:242px" width="18" height="18" viewBox="0 0 18 18"><defs><radialGradient id="mgl" cx="0.4" cy="0.65" r="0.7"><stop offset="0" stop-color="#F2FAFF"/><stop offset="1" stop-color="#A6DAF8"/></radialGradient></defs><path d="M10.6 10.9 L15.3 15.4" stroke="#5E5E88" stroke-width="3" stroke-linecap="round"/><path d="M11.3 10.3 L16 14.6" stroke="#F2A02C" stroke-width="2.2" stroke-linecap="round"/><circle cx="6.7" cy="6.4" r="5" fill="url(#mgl)" stroke="#8486B4" stroke-width="1"/><path d="M1.9 7.6 Q2.6 10.6 5.8 11.3" fill="none" stroke="#4E4E7A" stroke-width="1" opacity="0.8"/><path d="M3.4 4.8 Q4.6 2.6 7.4 2.5" fill="none" stroke="#ffffff" stroke-width="0.9" opacity="0.9"/></svg>
<div class="a" style="left:334px;top:240px;width:20px;height:24px;border:1px solid #7B93B4;background:linear-gradient(#ffffff,#e6eef7 45%,#c3d5ea)"></div>
<svg class="a" style="left:334px;top:240px" width="20" height="24"><path d="M5 10.2 L15.4 10.2 L10.2 15.6 Z" fill="#1a1a1a"/></svg>
<div class="a" style="left:99px;top:268px;width:255px;height:24px;background:#eeeeee;border:1px solid #7B93B4;box-shadow:inset 1px 1px 0 0 #c9d8ea"></div>
<svg class="a" style="left:317px;top:270px" width="18" height="18" viewBox="0 0 18 18"><defs><radialGradient id="mgl" cx="0.4" cy="0.65" r="0.7"><stop offset="0" stop-color="#F2FAFF"/><stop offset="1" stop-color="#A6DAF8"/></radialGradient></defs><path d="M10.6 10.9 L15.3 15.4" stroke="#5E5E88" stroke-width="3" stroke-linecap="round"/><path d="M11.3 10.3 L16 14.6" stroke="#F2A02C" stroke-width="2.2" stroke-linecap="round"/><circle cx="6.7" cy="6.4" r="5" fill="url(#mgl)" stroke="#8486B4" stroke-width="1"/><path d="M1.9 7.6 Q2.6 10.6 5.8 11.3" fill="none" stroke="#4E4E7A" stroke-width="1" opacity="0.8"/><path d="M3.4 4.8 Q4.6 2.6 7.4 2.5" fill="none" stroke="#ffffff" stroke-width="0.9" opacity="0.9"/></svg>
<div class="a" style="left:334px;top:268px;width:20px;height:24px;border:1px solid #7B93B4;background:linear-gradient(#ffffff,#e6eef7 45%,#c3d5ea)"></div>
<svg class="a" style="left:334px;top:268px" width="20" height="24"><path d="M5 10.2 L15.4 10.2 L10.2 15.6 Z" fill="#1a1a1a"/></svg>
<div class="fe" style="left:99px;top:296px;width:255px;height:24px"></div>
<svg class="a" style="left:334px;top:297px" width="18" height="18" viewBox="0 0 18 18"><defs><radialGradient id="mgl" cx="0.4" cy="0.65" r="0.7"><stop offset="0" stop-color="#F2FAFF"/><stop offset="1" stop-color="#A6DAF8"/></radialGradient></defs><path d="M10.6 10.9 L15.3 15.4" stroke="#5E5E88" stroke-width="3" stroke-linecap="round"/><path d="M11.3 10.3 L16 14.6" stroke="#F2A02C" stroke-width="2.2" stroke-linecap="round"/><circle cx="6.7" cy="6.4" r="5" fill="url(#mgl)" stroke="#8486B4" stroke-width="1"/><path d="M1.9 7.6 Q2.6 10.6 5.8 11.3" fill="none" stroke="#4E4E7A" stroke-width="1" opacity="0.8"/><path d="M3.4 4.8 Q4.6 2.6 7.4 2.5" fill="none" stroke="#ffffff" stroke-width="0.9" opacity="0.9"/></svg>
<div class="a" style="left:366px;top:131px;width:215px;height:98px;border:1px solid #b8b8b8"></div>
<div class="lbl" style="left:371px;top:125px;background:#fff;padding:0 2px;font-weight:bold;color:#111;letter-spacing:-0.2px">Charge Duration</div>
<div class="lbl" style="left:369px;top:144px;">Start Date/Time</div>
<div class="fd" style="left:458px;top:141px;width:120px;height:24px">05/06/2018</div>
<div class="lbl" style="left:369px;top:173px;">End Date/Time</div>
<div class="fd" style="left:458px;top:170px;width:120px;height:24px">05/10/2018</div>
<div class="lbl" style="left:369px;top:202px;">Duration</div>
<div class="fd" style="left:458px;top:199px;width:85px;height:24px">5d</div>
<div class="lbl" style="left:362px;top:242px;">Customer</div>
<div class="fd" style="left:421px;top:236px;width:160px;height:24px">Intra-Company for Paris Site</div>
<svg class="a" style="left:561px;top:236px" width="18" height="18" viewBox="0 0 18 18"><defs><radialGradient id="mgl" cx="0.4" cy="0.65" r="0.7"><stop offset="0" stop-color="#F2FAFF"/><stop offset="1" stop-color="#A6DAF8"/></radialGradient></defs><path d="M10.6 10.9 L15.3 15.4" stroke="#5E5E88" stroke-width="3" stroke-linecap="round"/><path d="M11.3 10.3 L16 14.6" stroke="#F2A02C" stroke-width="2.2" stroke-linecap="round"/><circle cx="6.7" cy="6.4" r="5" fill="url(#mgl)" stroke="#8486B4" stroke-width="1"/><path d="M1.9 7.6 Q2.6 10.6 5.8 11.3" fill="none" stroke="#4E4E7A" stroke-width="1" opacity="0.8"/><path d="M3.4 4.8 Q4.6 2.6 7.4 2.5" fill="none" stroke="#ffffff" stroke-width="0.9" opacity="0.9"/></svg>
<div class="lbl" style="left:362px;top:270px;">Contact</div>
<div class="fd" style="left:421px;top:265px;width:160px;height:24px">Eden</div>
<svg class="a" style="left:561px;top:266px" width="18" height="18" viewBox="0 0 18 18"><defs><radialGradient id="mgl" cx="0.4" cy="0.65" r="0.7"><stop offset="0" stop-color="#F2FAFF"/><stop offset="1" stop-color="#A6DAF8"/></radialGradient></defs><path d="M10.6 10.9 L15.3 15.4" stroke="#5E5E88" stroke-width="3" stroke-linecap="round"/><path d="M11.3 10.3 L16 14.6" stroke="#F2A02C" stroke-width="2.2" stroke-linecap="round"/><circle cx="6.7" cy="6.4" r="5" fill="url(#mgl)" stroke="#8486B4" stroke-width="1"/><path d="M1.9 7.6 Q2.6 10.6 5.8 11.3" fill="none" stroke="#4E4E7A" stroke-width="1" opacity="0.8"/><path d="M3.4 4.8 Q4.6 2.6 7.4 2.5" fill="none" stroke="#ffffff" stroke-width="0.9" opacity="0.9"/></svg>
<div class="lbl" style="left:362px;top:299px;">Contact Tel #</div>
<div class="fd" style="left:451px;top:294px;width:129px;height:24px"></div>
<div class="lbl" style="left:588px;top:131px;">Conv. Date</div>
<div class="fd" style="left:655px;top:126px;width:89px;height:24px"></div>
<svg class="a" style="left:589px;top:160px" width="12" height="12" viewBox="0 0 12 12"><defs><linearGradient id="cbg" x1="0" y1="0" x2="1" y2="1"><stop offset="0.3" stop-color="#ffffff"/><stop offset="1" stop-color="#F0A066"/></linearGradient></defs><rect x="0" y="0" width="12" height="12" fill="#fff"/><rect x="2" y="2" width="9.5" height="9.5" fill="url(#cbg)"/><path d="M0.5 11.5 V0.5 H11.5" fill="none" stroke="#6C7C90" stroke-width="1"/><path d="M11.5 2 V11.5 H2" fill="none" stroke="#6C7C90" stroke-width="1"/><path d="M2.9 5.2 L4.8 5.2 L5.1 7.8 L9.6 2.8 L10.4 3.6 L5.1 10 L3.3 10 Z" fill="#111" stroke="#111" stroke-width="0.3"/></svg>
<div class="lbl" style="left:606px;top:160px;letter-spacing:0.25px">Show Suggestions</div>
<svg class="a" style="left:589px;top:180px" width="12" height="12" viewBox="0 0 12 12"><defs><linearGradient id="cbg" x1="0" y1="0" x2="1" y2="1"><stop offset="0.3" stop-color="#ffffff"/><stop offset="1" stop-color="#F0A066"/></linearGradient></defs><rect x="0" y="0" width="12" height="12" fill="#fff"/><rect x="2" y="2" width="9.5" height="9.5" fill="url(#cbg)"/><path d="M0.5 11.5 V0.5 H11.5" fill="none" stroke="#b9c6dc" stroke-width="1"/><path d="M11.5 2 V11.5 H2" fill="none" stroke="#b9c6dc" stroke-width="1"/></svg>
<div class="lbl" style="left:606px;top:180px;color:#9a9a9a;letter-spacing:0">Event Pricing</div>
<svg class="a" style="left:589px;top:200px" width="12" height="12" viewBox="0 0 12 12"><defs><linearGradient id="cbg" x1="0" y1="0" x2="1" y2="1"><stop offset="0.3" stop-color="#ffffff"/><stop offset="1" stop-color="#F0A066"/></linearGradient></defs><rect x="0" y="0" width="12" height="12" fill="#fff"/><rect x="2" y="2" width="9.5" height="9.5" fill="url(#cbg)"/><path d="M0.5 11.5 V0.5 H11.5" fill="none" stroke="#6C7C90" stroke-width="1"/><path d="M11.5 2 V11.5 H2" fill="none" stroke="#6C7C90" stroke-width="1"/><path d="M2.9 5.2 L4.8 5.2 L5.1 7.8 L9.6 2.8 L10.4 3.6 L5.1 10 L3.3 10 Z" fill="#111" stroke="#111" stroke-width="0.3"/></svg>
<div class="lbl" style="left:606px;top:200px;letter-spacing:0">Day-Week-Month Pricing</div>
<div class="lbl" style="left:587px;top:241px;">Bill To</div>
<div class="fd" style="left:654px;top:236px;width:160px;height:24px">Intra-Company for Paris Site</div>
<svg class="a" style="left:794px;top:236px" width="18" height="18" viewBox="0 0 18 18"><defs><radialGradient id="mgl" cx="0.4" cy="0.65" r="0.7"><stop offset="0" stop-color="#F2FAFF"/><stop offset="1" stop-color="#A6DAF8"/></radialGradient></defs><path d="M10.6 10.9 L15.3 15.4" stroke="#5E5E88" stroke-width="3" stroke-linecap="round"/><path d="M11.3 10.3 L16 14.6" stroke="#F2A02C" stroke-width="2.2" stroke-linecap="round"/><circle cx="6.7" cy="6.4" r="5" fill="url(#mgl)" stroke="#8486B4" stroke-width="1"/><path d="M1.9 7.6 Q2.6 10.6 5.8 11.3" fill="none" stroke="#4E4E7A" stroke-width="1" opacity="0.8"/><path d="M3.4 4.8 Q4.6 2.6 7.4 2.5" fill="none" stroke="#ffffff" stroke-width="0.9" opacity="0.9"/></svg>
<div class="lbl" style="left:587px;top:270px;">Bill Contact</div>
<div class="fd" style="left:654px;top:265px;width:160px;height:24px">Eden</div>
<svg class="a" style="left:794px;top:266px" width="18" height="18" viewBox="0 0 18 18"><defs><radialGradient id="mgl" cx="0.4" cy="0.65" r="0.7"><stop offset="0" stop-color="#F2FAFF"/><stop offset="1" stop-color="#A6DAF8"/></radialGradient></defs><path d="M10.6 10.9 L15.3 15.4" stroke="#5E5E88" stroke-width="3" stroke-linecap="round"/><path d="M11.3 10.3 L16 14.6" stroke="#F2A02C" stroke-width="2.2" stroke-linecap="round"/><circle cx="6.7" cy="6.4" r="5" fill="url(#mgl)" stroke="#8486B4" stroke-width="1"/><path d="M1.9 7.6 Q2.6 10.6 5.8 11.3" fill="none" stroke="#4E4E7A" stroke-width="1" opacity="0.8"/><path d="M3.4 4.8 Q4.6 2.6 7.4 2.5" fill="none" stroke="#ffffff" stroke-width="0.9" opacity="0.9"/></svg>
<div class="lbl" style="left:587px;top:299px;">Language</div>
<div class="fd" style="left:654px;top:294px;width:90px;height:24px"></div>
<svg class="a" style="left:724px;top:295px" width="18" height="18" viewBox="0 0 18 18"><defs><radialGradient id="mgl" cx="0.4" cy="0.65" r="0.7"><stop offset="0" stop-color="#F2FAFF"/><stop offset="1" stop-color="#A6DAF8"/></radialGradient></defs><path d="M10.6 10.9 L15.3 15.4" stroke="#5E5E88" stroke-width="3" stroke-linecap="round"/><path d="M11.3 10.3 L16 14.6" stroke="#F2A02C" stroke-width="2.2" stroke-linecap="round"/><circle cx="6.7" cy="6.4" r="5" fill="url(#mgl)" stroke="#8486B4" stroke-width="1"/><path d="M1.9 7.6 Q2.6 10.6 5.8 11.3" fill="none" stroke="#4E4E7A" stroke-width="1" opacity="0.8"/><path d="M3.4 4.8 Q4.6 2.6 7.4 2.5" fill="none" stroke="#ffffff" stroke-width="0.9" opacity="0.9"/></svg>
<svg class="a" style="left:844px;top:126px" width="120" height="22"><polygon points="0.5,22 0.5,6.5 6.5,0.5 119.5,0.5 119.5,22" fill="#FB9B4C" stroke="#7B8FA6" stroke-width="1"/><polyline points="1.5,22 1.5,7 7,1.5 118.5,1.5" fill="none" stroke="#FFD0A0" stroke-width="1"/></svg>
<div class="tabtxt" style="left:849.7px;top:131px;color:#111;letter-spacing:0.2px">LaborComments</div>
<svg class="a" style="left:754px;top:126px" width="91" height="22"><polygon points="0.5,22 0.5,6.5 6.5,0.5 90.5,0.5 90.5,22" fill="#C44B2B" stroke="#5F86CF" stroke-width="1"/><polyline points="1.5,22 1.5,7 7,1.5 89.5,1.5" fill="none" stroke="#ffffff" stroke-width="1"/></svg>
<div class="tabtxt" style="left:759.5px;top:131px;color:#fff;font-weight:bold;letter-spacing:0px">Comments</div>
<div class="a" style="left:752px;top:148px;width:290px;height:83px;background:#C9DEF4;border-left:1px solid #6D8FD0;border-top:1px solid #6D8FD0;border-right:1px solid #8092AD;border-bottom:1px solid #8092AD"></div>
<div class="a" style="left:754px;top:152px;width:285px;height:76px;background:#fff"></div>
<div class="a" style="left:754px;top:152px;width:284px;height:75px;border:1px solid #a3a3a3;background:#fff"></div>
<div class="a" style="left:755px;top:148px;width:89px;height:1px;background:#C9DEF4"></div>
<div class="a" style="left:761px;top:154px;width:269px;height:69px;border:2px solid #6B747E;background:#eeeeee"></div>
<svg class="a" style="left:1010px;top:155px" width="18" height="18" viewBox="0 0 18 18"><defs><radialGradient id="mgl" cx="0.4" cy="0.65" r="0.7"><stop offset="0" stop-color="#F2FAFF"/><stop offset="1" stop-color="#A6DAF8"/></radialGradient></defs><path d="M10.6 10.9 L15.3 15.4" stroke="#5E5E88" stroke-width="3" stroke-linecap="round"/><path d="M11.3 10.3 L16 14.6" stroke="#F2A02C" stroke-width="2.2" stroke-linecap="round"/><circle cx="6.7" cy="6.4" r="5" fill="url(#mgl)" stroke="#8486B4" stroke-width="1"/><path d="M1.9 7.6 Q2.6 10.6 5.8 11.3" fill="none" stroke="#4E4E7A" stroke-width="1" opacity="0.8"/><path d="M3.4 4.8 Q4.6 2.6 7.4 2.5" fill="none" stroke="#ffffff" stroke-width="0.9" opacity="0.9"/></svg>
<div class="lbl" style="left:827px;top:248px;">Document Folder:</div>
<div class="a" style="left:1014px;top:240px;width:49px;height:23px;border:1px solid #9d9d9d;background:#fff"></div>
<div class="a" style="left:1024px;top:242px;width:30px;height:20px;border:1px solid #6E6464;border-radius:1.5px;background:#fff"></div>
<div class="a" style="left:1025.6px;top:246px;font-size:11px;line-height:12px;letter-spacing:-0.45px;color:#000;-webkit-text-stroke:0.35px #000;white-space:nowrap">Reset</div>
<div class="a" style="left:826px;top:264px;width:216px;height:49px;border:2px solid #6B747E;background:#eeeeee"></div>
<svg class="a" style="left:77px;top:334px" width="58" height="22"><polygon points="0.5,22 0.5,6.5 6.5,0.5 57.5,0.5 57.5,22" fill="#FB9B4C" stroke="#7B8FA6" stroke-width="1"/><polyline points="1.5,22 1.5,7 7,1.5 56.5,1.5" fill="none" stroke="#FFD0A0" stroke-width="1"/></svg>
<div class="tabtxt" style="left:82.7px;top:339px;color:#111;letter-spacing:0.2px">Labor</div>
<svg class="a" style="left:10px;top:334px" width="67" height="22"><polygon points="0.5,22 0.5,6.5 6.5,0.5 66.5,0.5 66.5,22" fill="#C44B2B" stroke="#5F86CF" stroke-width="1"/><polyline points="1.5,22 1.5,7 7,1.5 65.5,1.5" fill="none" stroke="#ffffff" stroke-width="1"/></svg>
<div class="tabtxt" style="left:15.5px;top:339px;color:#fff;font-weight:bold;letter-spacing:0px">Item(s)</div>
<div class="a" style="left:8px;top:356px;width:1172px;height:303px;background:#C9DEF4;border-left:1px solid #6D8FD0;border-top:1px solid #6D8FD0;border-right:1px solid #8092AD;border-bottom:1px solid #8092AD"></div>
<div class="a" style="left:10px;top:360px;width:1167px;height:296px;background:#fff"></div>
<div class="a" style="left:10px;top:360px;width:1166px;height:295px;border:1px solid #a3a3a3;background:#fff"></div>
<div class="a" style="left:11px;top:356px;width:65px;height:1px;background:#C9DEF4"></div>
<div class="a" style="left:10px;top:393px;width:1166px;height:1px;background:#b4b4b4"></div>
<div class="a" style="left:10px;top:394px;width:1166px;height:1px;background:#fff"></div>
<div class="a" style="left:10px;top:395px;width:1166px;height:1px;background:#b4b4b4"></div>
<div class="lbl" style="left:45px;top:369px;letter-spacing:0">Search :</div>
<div class="lbl" style="left:120px;top:369px;letter-spacing:0.3px">Asset</div>
<div class="fe" style="left:162px;top:365px;width:120px;height:24px"></div>
<div class="lbl" style="left:362px;top:369px;letter-spacing:0.3px">Product</div>
<div class="fe" style="left:412px;top:365px;width:195px;height:24px"></div>
<div class="lbl" style="left:625px;top:369px">Qty</div>
<div class="fe" style="left:647px;top:365px;width:40px;height:24px;padding-top:5px">1</div>
<svg class="a" style="left:707px;top:371px" width="12" height="12" viewBox="0 0 12 12"><defs><linearGradient id="cbg" x1="0" y1="0" x2="1" y2="1"><stop offset="0.3" stop-color="#ffffff"/><stop offset="1" stop-color="#F0A066"/></linearGradient></defs><rect x="0" y="0" width="12" height="12" fill="#fff"/><rect x="2" y="2" width="9.5" height="9.5" fill="url(#cbg)"/><path d="M0.5 11.5 V0.5 H11.5" fill="none" stroke="#6C7C90" stroke-width="1"/><path d="M11.5 2 V11.5 H2" fill="none" stroke="#6C7C90" stroke-width="1"/></svg>
<div class="lbl" style="left:724px;top:371px;letter-spacing:0.15px">Update existing lines</div>
<div class="a" style="left:12px;top:397px;width:1162px;height:256px;border:1px solid #73879C;background:#fff"></div>
<div class="a" style="left:13px;top:398px;width:1160px;height:79px;overflow:hidden">
<div class="th" style="left:0px;top:0;width:15px;">T</div>
<div class="td" style="left:0px;top:20px;width:15px;padding:0"><svg class="a" style="left:1px;top:3px" width="12" height="12" viewBox="0 0 12 12"><defs><linearGradient id="cbg" x1="0" y1="0" x2="1" y2="1"><stop offset="0.3" stop-color="#ffffff"/><stop offset="1" stop-color="#F0A066"/></linearGradient></defs><rect x="0" y="0" width="12" height="12" fill="#fff"/><rect x="2" y="2" width="9.5" height="9.5" fill="url(#cbg)"/><path d="M0.5 11.5 V0.5 H11.5" fill="none" stroke="#6C7C90" stroke-width="1"/><path d="M11.5 2 V11.5 H2" fill="none" stroke="#6C7C90" stroke-width="1"/><path d="M2.9 5.2 L4.8 5.2 L5.1 7.8 L9.6 2.8 L10.4 3.6 L5.1 10 L3.3 10 Z" fill="#111" stroke="#111" stroke-width="0.3"/></svg></div>
<div class="td" style="left:0px;top:39px;width:15px;padding:0"><svg class="a" style="left:1px;top:3px" width="12" height="12" viewBox="0 0 12 12"><defs><linearGradient id="cbg" x1="0" y1="0" x2="1" y2="1"><stop offset="0.3" stop-color="#ffffff"/><stop offset="1" stop-color="#F0A066"/></linearGradient></defs><rect x="0" y="0" width="12" height="12" fill="#fff"/><rect x="2" y="2" width="9.5" height="9.5" fill="url(#cbg)"/><path d="M0.5 11.5 V0.5 H11.5" fill="none" stroke="#6C7C90" stroke-width="1"/><path d="M11.5 2 V11.5 H2" fill="none" stroke="#6C7C90" stroke-width="1"/><path d="M2.9 5.2 L4.8 5.2 L5.1 7.8 L9.6 2.8 L10.4 3.6 L5.1 10 L3.3 10 Z" fill="#111" stroke="#111" stroke-width="0.3"/></svg></div>
<div class="td" style="left:0px;top:58px;width:15px;padding:0"><svg class="a" style="left:1px;top:3px" width="12" height="12" viewBox="0 0 12 12"><defs><linearGradient id="cbg" x1="0" y1="0" x2="1" y2="1"><stop offset="0.3" stop-color="#ffffff"/><stop offset="1" stop-color="#F0A066"/></linearGradient></defs><rect x="0" y="0" width="12" height="12" fill="#fff"/><rect x="2" y="2" width="9.5" height="9.5" fill="url(#cbg)"/><path d="M0.5 11.5 V0.5 H11.5" fill="none" stroke="#6C7C90" stroke-width="1"/><path d="M11.5 2 V11.5 H2" fill="none" stroke="#6C7C90" stroke-width="1"/><path d="M2.9 5.2 L4.8 5.2 L5.1 7.8 L9.6 2.8 L10.4 3.6 L5.1 10 L3.3 10 Z" fill="#111" stroke="#111" stroke-width="0.3"/></svg></div>
<div class="th" style="left:15px;top:0;width:15px;">C</div>
<div class="td" style="left:15px;top:20px;width:15px;padding:0"><svg class="a" style="left:1px;top:3px" width="12" height="12" viewBox="0 0 12 12"><defs><linearGradient id="cbg" x1="0" y1="0" x2="1" y2="1"><stop offset="0.3" stop-color="#ffffff"/><stop offset="1" stop-color="#F0A066"/></linearGradient></defs><rect x="0" y="0" width="12" height="12" fill="#fff"/><rect x="2" y="2" width="9.5" height="9.5" fill="url(#cbg)"/><path d="M0.5 11.5 V0.5 H11.5" fill="none" stroke="#6C7C90" stroke-width="1"/><path d="M11.5 2 V11.5 H2" fill="none" stroke="#6C7C90" stroke-width="1"/><path d="M2.9 5.2 L4.8 5.2 L5.1 7.8 L9.6 2.8 L10.4 3.6 L5.1 10 L3.3 10 Z" fill="#111" stroke="#111" stroke-width="0.3"/></svg></div>
<div class="td" style="left:15px;top:39px;width:15px;padding:0"><svg class="a" style="left:1px;top:3px" width="12" height="12" viewBox="0 0 12 12"><defs><linearGradient id="cbg" x1="0" y1="0" x2="1" y2="1"><stop offset="0.3" stop-color="#ffffff"/><stop offset="1" stop-color="#F0A066"/></linearGradient></defs><rect x="0" y="0" width="12" height="12" fill="#fff"/><rect x="2" y="2" width="9.5" height="9.5" fill="url(#cbg)"/><path d="M0.5 11.5 V0.5 H11.5" fill="none" stroke="#6C7C90" stroke-width="1"/><path d="M11.5 2 V11.5 H2" fill="none" stroke="#6C7C90" stroke-width="1"/><path d="M2.9 5.2 L4.8 5.2 L5.1 7.8 L9.6 2.8 L10.4 3.6 L5.1 10 L3.3 10 Z" fill="#111" stroke="#111" stroke-width="0.3"/></svg></div>
<div class="td" style="left:15px;top:58px;width:15px;padding:0"><svg class="a" style="left:1px;top:3px" width="12" height="12" viewBox="0 0 12 12"><defs><linearGradient id="cbg" x1="0" y1="0" x2="1" y2="1"><stop offset="0.3" stop-color="#ffffff"/><stop offset="1" stop-color="#F0A066"/></linearGradient></defs><rect x="0" y="0" width="12" height="12" fill="#fff"/><rect x="2" y="2" width="9.5" height="9.5" fill="url(#cbg)"/><path d="M0.5 11.5 V0.5 H11.5" fill="none" stroke="#6C7C90" stroke-width="1"/><path d="M11.5 2 V11.5 H2" fill="none" stroke="#6C7C90" stroke-width="1"/></svg></div>
<div class="th" style="left:30px;top:0;width:15px;">X</div>
<div class="td" style="left:30px;top:20px;width:15px;padding:0"><svg class="a" style="left:1px;top:3px" width="12" height="12" viewBox="0 0 12 12"><defs><linearGradient id="cbg" x1="0" y1="0" x2="1" y2="1"><stop offset="0.3" stop-color="#ffffff"/><stop offset="1" stop-color="#F0A066"/></linearGradient></defs><rect x="0" y="0" width="12" height="12" fill="#fff"/><rect x="2" y="2" width="9.5" height="9.5" fill="url(#cbg)"/><path d="M0.5 11.5 V0.5 H11.5" fill="none" stroke="#6C7C90" stroke-width="1"/><path d="M11.5 2 V11.5 H2" fill="none" stroke="#6C7C90" stroke-width="1"/></svg></div>
<div class="td" style="left:30px;top:39px;width:15px;padding:0"><svg class="a" style="left:1px;top:3px" width="12" height="12" viewBox="0 0 12 12"><defs><linearGradient id="cbg" x1="0" y1="0" x2="1" y2="1"><stop offset="0.3" stop-color="#ffffff"/><stop offset="1" stop-color="#F0A066"/></linearGradient></defs><rect x="0" y="0" width="12" height="12" fill="#fff"/><rect x="2" y="2" width="9.5" height="9.5" fill="url(#cbg)"/><path d="M0.5 11.5 V0.5 H11.5" fill="none" stroke="#6C7C90" stroke-width="1"/><path d="M11.5 2 V11.5 H2" fill="none" stroke="#6C7C90" stroke-width="1"/></svg></div>
<div class="td" style="left:30px;top:58px;width:15px;padding:0"><svg class="a" style="left:1px;top:3px" width="12" height="12" viewBox="0 0 12 12"><defs><linearGradient id="cbg" x1="0" y1="0" x2="1" y2="1"><stop offset="0.3" stop-color="#ffffff"/><stop offset="1" stop-color="#F0A066"/></linearGradient></defs><rect x="0" y="0" width="12" height="12" fill="#fff"/><rect x="2" y="2" width="9.5" height="9.5" fill="url(#cbg)"/><path d="M0.5 11.5 V0.5 H11.5" fill="none" stroke="#6C7C90" stroke-width="1"/><path d="M11.5 2 V11.5 H2" fill="none" stroke="#6C7C90" stroke-width="1"/></svg></div>
<div class="th" style="left:45px;top:0;width:15px;">M</div>
<div class="td" style="left:45px;top:20px;width:15px;padding:0"><svg class="a" style="left:1px;top:3px" width="12" height="12" viewBox="0 0 12 12"><defs><linearGradient id="cbg" x1="0" y1="0" x2="1" y2="1"><stop offset="0.3" stop-color="#ffffff"/><stop offset="1" stop-color="#F0A066"/></linearGradient></defs><rect x="0" y="0" width="12" height="12" fill="#fff"/><rect x="2" y="2" width="9.5" height="9.5" fill="url(#cbg)"/><path d="M0.5 11.5 V0.5 H11.5" fill="none" stroke="#6C7C90" stroke-width="1"/><path d="M11.5 2 V11.5 H2" fill="none" stroke="#6C7C90" stroke-width="1"/></svg></div>
<div class="td" style="left:45px;top:39px;width:15px;padding:0"><svg class="a" style="left:1px;top:3px" width="12" height="12" viewBox="0 0 12 12"><defs><linearGradient id="cbg" x1="0" y1="0" x2="1" y2="1"><stop offset="0.3" stop-color="#ffffff"/><stop offset="1" stop-color="#F0A066"/></linearGradient></defs><rect x="0" y="0" width="12" height="12" fill="#fff"/><rect x="2" y="2" width="9.5" height="9.5" fill="url(#cbg)"/><path d="M0.5 11.5 V0.5 H11.5" fill="none" stroke="#6C7C90" stroke-width="1"/><path d="M11.5 2 V11.5 H2" fill="none" stroke="#6C7C90" stroke-width="1"/></svg></div>
<div class="td" style="left:45px;top:58px;width:15px;padding:0"><svg class="a" style="left:1px;top:3px" width="12" height="12" viewBox="0 0 12 12"><defs><linearGradient id="cbg" x1="0" y1="0" x2="1" y2="1"><stop offset="0.3" stop-color="#ffffff"/><stop offset="1" stop-color="#F0A066"/></linearGradient></defs><rect x="0" y="0" width="12" height="12" fill="#fff"/><rect x="2" y="2" width="9.5" height="9.5" fill="url(#cbg)"/><path d="M0.5 11.5 V0.5 H11.5" fill="none" stroke="#6C7C90" stroke-width="1"/><path d="M11.5 2 V11.5 H2" fill="none" stroke="#6C7C90" stroke-width="1"/></svg></div>
<div class="th" style="left:60px;top:0;width:15px;">S</div>
<div class="td" style="left:60px;top:20px;width:15px;padding:0"><svg class="a" style="left:1px;top:3px" width="12" height="12" viewBox="0 0 12 12"><defs><linearGradient id="cbg" x1="0" y1="0" x2="1" y2="1"><stop offset="0.3" stop-color="#ffffff"/><stop offset="1" stop-color="#F0A066"/></linearGradient></defs><rect x="0" y="0" width="12" height="12" fill="#fff"/><rect x="2" y="2" width="9.5" height="9.5" fill="url(#cbg)"/><path d="M0.5 11.5 V0.5 H11.5" fill="none" stroke="#6C7C90" stroke-width="1"/><path d="M11.5 2 V11.5 H2" fill="none" stroke="#6C7C90" stroke-width="1"/></svg></div>
<div class="td" style="left:60px;top:39px;width:15px;padding:0"><svg class="a" style="left:1px;top:3px" width="12" height="12" viewBox="0 0 12 12"><defs><linearGradient id="cbg" x1="0" y1="0" x2="1" y2="1"><stop offset="0.3" stop-color="#ffffff"/><stop offset="1" stop-color="#F0A066"/></linearGradient></defs><rect x="0" y="0" width="12" height="12" fill="#fff"/><rect x="2" y="2" width="9.5" height="9.5" fill="url(#cbg)"/><path d="M0.5 11.5 V0.5 H11.5" fill="none" stroke="#6C7C90" stroke-width="1"/><path d="M11.5 2 V11.5 H2" fill="none" stroke="#6C7C90" stroke-width="1"/></svg></div>
<div class="td" style="left:60px;top:58px;width:15px;padding:0"><svg class="a" style="left:1px;top:3px" width="12" height="12" viewBox="0 0 12 12"><defs><linearGradient id="cbg" x1="0" y1="0" x2="1" y2="1"><stop offset="0.3" stop-color="#ffffff"/><stop offset="1" stop-color="#F0A066"/></linearGradient></defs><rect x="0" y="0" width="12" height="12" fill="#fff"/><rect x="2" y="2" width="9.5" height="9.5" fill="url(#cbg)"/><path d="M0.5 11.5 V0.5 H11.5" fill="none" stroke="#6C7C90" stroke-width="1"/><path d="M11.5 2 V11.5 H2" fill="none" stroke="#6C7C90" stroke-width="1"/></svg></div>
<div class="th" style="left:75px;top:0;width:20px;">I.C</div>
<div class="td" style="left:75px;top:20px;width:20px;padding:0"><svg class="a" style="left:3px;top:3px" width="12" height="12" viewBox="0 0 12 12"><defs><linearGradient id="cbg" x1="0" y1="0" x2="1" y2="1"><stop offset="0.3" stop-color="#ffffff"/><stop offset="1" stop-color="#F0A066"/></linearGradient></defs><rect x="0" y="0" width="12" height="12" fill="#fff"/><rect x="2" y="2" width="9.5" height="9.5" fill="url(#cbg)"/><path d="M0.5 11.5 V0.5 H11.5" fill="none" stroke="#6C7C90" stroke-width="1"/><path d="M11.5 2 V11.5 H2" fill="none" stroke="#6C7C90" stroke-width="1"/></svg></div>
<div class="td" style="left:75px;top:39px;width:20px;padding:0"><svg class="a" style="left:3px;top:3px" width="12" height="12" viewBox="0 0 12 12"><defs><linearGradient id="cbg" x1="0" y1="0" x2="1" y2="1"><stop offset="0.3" stop-color="#ffffff"/><stop offset="1" stop-color="#F0A066"/></linearGradient></defs><rect x="0" y="0" width="12" height="12" fill="#fff"/><rect x="2" y="2" width="9.5" height="9.5" fill="url(#cbg)"/><path d="M0.5 11.5 V0.5 H11.5" fill="none" stroke="#6C7C90" stroke-width="1"/><path d="M11.5 2 V11.5 H2" fill="none" stroke="#6C7C90" stroke-width="1"/></svg></div>
<div class="td" style="left:75px;top:58px;width:20px;padding:0"><svg class="a" style="left:3px;top:3px" width="12" height="12" viewBox="0 0 12 12"><defs><linearGradient id="cbg" x1="0" y1="0" x2="1" y2="1"><stop offset="0.3" stop-color="#ffffff"/><stop offset="1" stop-color="#F0A066"/></linearGradient></defs><rect x="0" y="0" width="12" height="12" fill="#fff"/><rect x="2" y="2" width="9.5" height="9.5" fill="url(#cbg)"/><path d="M0.5 11.5 V0.5 H11.5" fill="none" stroke="#6C7C90" stroke-width="1"/><path d="M11.5 2 V11.5 H2" fill="none" stroke="#6C7C90" stroke-width="1"/></svg></div>
<div class="th" style="left:95px;top:0;width:20px;">I....</div>
<div class="td" style="left:95px;top:20px;width:20px;padding:0"><svg class="a" style="left:3px;top:3px" width="12" height="12" viewBox="0 0 12 12"><defs><linearGradient id="cbg" x1="0" y1="0" x2="1" y2="1"><stop offset="0.3" stop-color="#ffffff"/><stop offset="1" stop-color="#F0A066"/></linearGradient></defs><rect x="0" y="0" width="12" height="12" fill="#fff"/><rect x="2" y="2" width="9.5" height="9.5" fill="url(#cbg)"/><path d="M0.5 11.5 V0.5 H11.5" fill="none" stroke="#6C7C90" stroke-width="1"/><path d="M11.5 2 V11.5 H2" fill="none" stroke="#6C7C90" stroke-width="1"/></svg></div>
<div class="td" style="left:95px;top:39px;width:20px;padding:0"><svg class="a" style="left:3px;top:3px" width="12" height="12" viewBox="0 0 12 12"><defs><linearGradient id="cbg" x1="0" y1="0" x2="1" y2="1"><stop offset="0.3" stop-color="#ffffff"/><stop offset="1" stop-color="#F0A066"/></linearGradient></defs><rect x="0" y="0" width="12" height="12" fill="#fff"/><rect x="2" y="2" width="9.5" height="9.5" fill="url(#cbg)"/><path d="M0.5 11.5 V0.5 H11.5" fill="none" stroke="#6C7C90" stroke-width="1"/><path d="M11.5 2 V11.5 H2" fill="none" stroke="#6C7C90" stroke-width="1"/></svg></div>
<div class="td" style="left:95px;top:58px;width:20px;padding:0"><svg class="a" style="left:3px;top:3px" width="12" height="12" viewBox="0 0 12 12"><defs><linearGradient id="cbg" x1="0" y1="0" x2="1" y2="1"><stop offset="0.3" stop-color="#ffffff"/><stop offset="1" stop-color="#F0A066"/></linearGradient></defs><rect x="0" y="0" width="12" height="12" fill="#fff"/><rect x="2" y="2" width="9.5" height="9.5" fill="url(#cbg)"/><path d="M0.5 11.5 V0.5 H11.5" fill="none" stroke="#6C7C90" stroke-width="1"/><path d="M11.5 2 V11.5 H2" fill="none" stroke="#6C7C90" stroke-width="1"/></svg></div>
<div class="th" style="left:115px;top:0;width:20px;">I.I</div>
<div class="td" style="left:115px;top:20px;width:20px;padding:0"><svg class="a" style="left:3px;top:3px" width="12" height="12" viewBox="0 0 12 12"><defs><linearGradient id="cbg" x1="0" y1="0" x2="1" y2="1"><stop offset="0.3" stop-color="#ffffff"/><stop offset="1" stop-color="#F0A066"/></linearGradient></defs><rect x="0" y="0" width="12" height="12" fill="#fff"/><rect x="2" y="2" width="9.5" height="9.5" fill="url(#cbg)"/><path d="M0.5 11.5 V0.5 H11.5" fill="none" stroke="#6C7C90" stroke-width="1"/><path d="M11.5 2 V11.5 H2" fill="none" stroke="#6C7C90" stroke-width="1"/></svg></div>
<div class="td" style="left:115px;top:39px;width:20px;padding:0"><svg class="a" style="left:3px;top:3px" width="12" height="12" viewBox="0 0 12 12"><defs><linearGradient id="cbg" x1="0" y1="0" x2="1" y2="1"><stop offset="0.3" stop-color="#ffffff"/><stop offset="1" stop-color="#F0A066"/></linearGradient></defs><rect x="0" y="0" width="12" height="12" fill="#fff"/><rect x="2" y="2" width="9.5" height="9.5" fill="url(#cbg)"/><path d="M0.5 11.5 V0.5 H11.5" fill="none" stroke="#6C7C90" stroke-width="1"/><path d="M11.5 2 V11.5 H2" fill="none" stroke="#6C7C90" stroke-width="1"/></svg></div>
<div class="td" style="left:115px;top:58px;width:20px;padding:0"><svg class="a" style="left:3px;top:3px" width="12" height="12" viewBox="0 0 12 12"><defs><linearGradient id="cbg" x1="0" y1="0" x2="1" y2="1"><stop offset="0.3" stop-color="#ffffff"/><stop offset="1" stop-color="#F0A066"/></linearGradient></defs><rect x="0" y="0" width="12" height="12" fill="#fff"/><rect x="2" y="2" width="9.5" height="9.5" fill="url(#cbg)"/><path d="M0.5 11.5 V0.5 H11.5" fill="none" stroke="#6C7C90" stroke-width="1"/><path d="M11.5 2 V11.5 H2" fill="none" stroke="#6C7C90" stroke-width="1"/></svg></div>
<div class="th" style="left:135px;top:0;width:75px;">Status</div>
<div class="td" style="left:135px;top:20px;width:75px;">Reserved</div>
<div class="td" style="left:135px;top:39px;width:75px;">Reserved</div>
<div class="td" style="left:135px;top:58px;width:75px;">Reserved</div>
<div class="th" style="left:210px;top:0;width:20px;">L</div>
<div class="td" style="left:210px;top:20px;width:20px;padding:0"><svg class="a" style="left:3px;top:3px" width="12" height="12" viewBox="0 0 12 12"><defs><linearGradient id="cbg" x1="0" y1="0" x2="1" y2="1"><stop offset="0.3" stop-color="#ffffff"/><stop offset="1" stop-color="#F0A066"/></linearGradient></defs><rect x="0" y="0" width="12" height="12" fill="#fff"/><rect x="2" y="2" width="9.5" height="9.5" fill="url(#cbg)"/><path d="M0.5 11.5 V0.5 H11.5" fill="none" stroke="#6C7C90" stroke-width="1"/><path d="M11.5 2 V11.5 H2" fill="none" stroke="#6C7C90" stroke-width="1"/></svg></div>
<div class="td" style="left:210px;top:39px;width:20px;padding:0"><svg class="a" style="left:3px;top:3px" width="12" height="12" viewBox="0 0 12 12"><defs><linearGradient id="cbg" x1="0" y1="0" x2="1" y2="1"><stop offset="0.3" stop-color="#ffffff"/><stop offset="1" stop-color="#F0A066"/></linearGradient></defs><rect x="0" y="0" width="12" height="12" fill="#fff"/><rect x="2" y="2" width="9.5" height="9.5" fill="url(#cbg)"/><path d="M0.5 11.5 V0.5 H11.5" fill="none" stroke="#6C7C90" stroke-width="1"/><path d="M11.5 2 V11.5 H2" fill="none" stroke="#6C7C90" stroke-width="1"/></svg></div>
<div class="td" style="left:210px;top:58px;width:20px;padding:0"><svg class="a" style="left:3px;top:3px" width="12" height="12" viewBox="0 0 12 12"><defs><linearGradient id="cbg" x1="0" y1="0" x2="1" y2="1"><stop offset="0.3" stop-color="#ffffff"/><stop offset="1" stop-color="#F0A066"/></linearGradient></defs><rect x="0" y="0" width="12" height="12" fill="#fff"/><rect x="2" y="2" width="9.5" height="9.5" fill="url(#cbg)"/><path d="M0.5 11.5 V0.5 H11.5" fill="none" stroke="#6C7C90" stroke-width="1"/><path d="M11.5 2 V11.5 H2" fill="none" stroke="#6C7C90" stroke-width="1"/></svg></div>
<div class="th" style="left:230px;top:0;width:45px;">Action</div>
<div class="td" style="left:230px;top:20px;width:45px;">Rent</div>
<div class="td" style="left:230px;top:39px;width:45px;">Rent</div>
<div class="td" style="left:230px;top:58px;width:45px;">Rent</div>
<div class="th" style="left:275px;top:0;width:100px;">Product ID</div>
<div class="td" style="left:275px;top:20px;width:100px;">LGQ6</div>
<div class="td" style="left:275px;top:39px;width:100px;">LGQ6</div>
<div class="td" style="left:275px;top:58px;width:100px;">LG WM</div>
<div class="th" style="left:375px;top:0;width:156px;">Description</div>
<div class="td" style="left:375px;top:20px;width:156px;padding-left:7px;">LGQ6</div>
<div class="td" style="left:375px;top:39px;width:156px;padding-left:7px;">LGQ6</div>
<div class="td" style="left:375px;top:58px;width:156px;padding-left:7px;">LG WM</div>
<div class="th" style="left:531px;top:0;width:55px;">Duration</div>
<div class="td" style="left:531px;top:20px;width:55px;">5d</div>
<div class="td" style="left:531px;top:39px;width:55px;">5d</div>
<div class="td" style="left:531px;top:58px;width:55px;">5d</div>
<div class="th" style="left:586px;top:0;width:30px;">Qty</div>
<div class="td" style="left:586px;top:20px;width:30px;text-align:right;padding-right:1px;">3</div>
<div class="td" style="left:586px;top:39px;width:30px;text-align:right;padding-right:1px;">4</div>
<div class="td" style="left:586px;top:58px;width:30px;text-align:right;padding-right:1px;">1</div>
<div class="th" style="left:616px;top:0;width:100px;">Shipping Site</div>
<div class="td" style="left:616px;top:20px;width:100px;">COLOGNE</div>
<div class="td" style="left:616px;top:39px;width:100px;">BERLIN</div>
<div class="td" style="left:616px;top:58px;width:100px;">COLOGNE</div>
<div class="th" style="left:716px;top:0;width:100px;">Returning Site</div>
<div class="td" style="left:716px;top:20px;width:100px;">PARIS</div>
<div class="td" style="left:716px;top:39px;width:100px;">PARIS</div>
<div class="td" style="left:716px;top:58px;width:100px;">PARIS</div>
<div class="th" style="left:816px;top:0;width:40px;">Unit</div>
<div class="td" style="left:816px;top:20px;width:40px;">Day</div>
<div class="td" style="left:816px;top:39px;width:40px;">Day</div>
<div class="td" style="left:816px;top:58px;width:40px;">Day</div>
<div class="th" style="left:856px;top:0;width:90px;letter-spacing:0;">Day/Each Price</div>
<div class="td" style="left:856px;top:20px;width:90px;text-align:right;padding-right:1px;">0.00</div>
<div class="td" style="left:856px;top:39px;width:90px;text-align:right;padding-right:1px;">0.00</div>
<div class="td" style="left:856px;top:58px;width:90px;text-align:right;padding-right:1px;">0.00</div>
<div class="th" style="left:946px;top:0;width:70px;">Week Price</div>
<div class="td" style="left:946px;top:20px;width:70px;text-align:right;padding-right:1px;">0.00</div>
<div class="td" style="left:946px;top:39px;width:70px;text-align:right;padding-right:1px;">0.00</div>
<div class="td" style="left:946px;top:58px;width:70px;text-align:right;padding-right:1px;">0.00</div>
<div class="th" style="left:1016px;top:0;width:70px;">Month Price</div>
<div class="td" style="left:1016px;top:20px;width:70px;text-align:right;padding-right:1px;">0.00</div>
<div class="td" style="left:1016px;top:39px;width:70px;text-align:right;padding-right:1px;">0.00</div>
<div class="td" style="left:1016px;top:58px;width:70px;text-align:right;padding-right:1px;">0.00</div>
<div class="th" style="left:1086px;top:0;width:55px;">Discount</div>
<div class="td" style="left:1086px;top:20px;width:55px;text-align:right;padding-right:1px;">0.00</div>
<div class="td" style="left:1086px;top:39px;width:55px;text-align:right;padding-right:1px;">0.00</div>
<div class="td" style="left:1086px;top:58px;width:55px;text-align:right;padding-right:1px;">0.00</div>
<div class="th" style="left:1141px;top:0;width:27px;text-align:left;padding-left:4px;">Net</div>
<div class="td" style="left:1141px;top:20px;width:27px;text-align:right;padding-right:1px;"></div>
<div class="td" style="left:1141px;top:39px;width:27px;text-align:right;padding-right:1px;"></div>
<div class="td" style="left:1141px;top:58px;width:27px;text-align:right;padding-right:1px;"></div>
</div>
<div class="a" style="left:147px;top:398px;width:76px;height:77px;border:2px solid #B50E0E"></div>
<div class="a" style="left:596px;top:398px;width:234px;height:79px;border:2px solid #B50E0E"></div>
<div class="a" style="left:13px;top:635px;width:1160px;height:16px;background:#ececec;border-top:1px solid #7B8EA6;border-bottom:1px solid #7B8EA6"></div>
<div class="a" style="left:13px;top:636px;width:15px;height:14px;background:#efefef;border-top:1px solid #fff;border-left:1px solid #fff"></div>
<svg class="a" style="left:13px;top:636px" width="15" height="14"><path d="M10.2 3.6 L5.6 7.8 L10.2 12 Z" fill="#1a1a1a"/></svg>
<div class="a" style="left:1156px;top:636px;width:16px;height:14px;background:#efefef;border-left:1px solid #7B8EA6;border-right:1px solid #7B8EA6;box-shadow:inset 1px 1px 0 #fff"></div>
<div class="a" style="left:1172px;top:635px;width:1px;height:16px;background:#fff"></div>
<div class="a" style="left:13px;top:651px;width:1143px;height:1px;background:#A9BAD0"></div>
<svg class="a" style="left:1156px;top:636px" width="16" height="14"><path d="M6 3.6 L10.6 7.8 L6 12 Z" fill="#1a1a1a"/></svg>
<div class="a" style="left:28px;top:635px;width:567px;height:16px;background:linear-gradient(#F1BB96 0%,#ECA97E 45%,#E89E6E 100%);border:1px solid #FAB400"></div>
<div class="a" style="left:309px;top:639px;width:5px;height:8px;border-left:1px solid #8a7fa0;border-right:1px solid #8a7fa0"></div><div class="a" style="left:311px;top:639px;width:1px;height:8px;background:#8a7fa0"></div>
<div class="tot" style="left:70px;top:666px;letter-spacing:0.2px">Items</div>
<div class="a" style="left:120px;top:661px;width:100px;height:24px;background:#eeeeee;border:1px solid #858585;font-size:14px;font-weight:bold;line-height:16px;padding:3px 0 0 1px;color:#111"></div>
<div class="tot" style="left:235px;top:666px;letter-spacing:0.3px">Labor</div>
<div class="a" style="left:287px;top:661px;width:100px;height:24px;background:#eeeeee;border:1px solid #858585;font-size:14px;font-weight:bold;line-height:16px;padding:3px 0 0 1px;color:#111"></div>
<div class="tot" style="left:446px;top:666px;letter-spacing:0.3px">Sub Total</div>
<div class="a" style="left:525px;top:661px;width:100px;height:24px;background:#eeeeee;border:1px solid #858585;font-size:14px;font-weight:bold;line-height:16px;padding:3px 0 0 1px;color:#111"></div>
<div class="tot" style="left:636px;top:666px">Tax</div>
<div class="a" style="left:670px;top:661px;width:100px;height:24px;background:#eeeeee;border:1px solid #858585;font-size:14px;font-weight:bold;line-height:16px;padding:3px 0 0 1px;color:#111"></div>
<div class="a" style="left:813px;top:661px;width:89px;height:23px;background:#fff;border:1px solid #c4c4c4"></div>
<div class="tot" style="left:813px;top:666px;width:89px;text-align:center;letter-spacing:0.3px">Total</div>
<div class="a" style="left:906px;top:661px;width:100px;height:24px;background:#eeeeee;border:1px solid #858585;font-size:14px;font-weight:bold;line-height:16px;padding:3px 0 0 1px;color:#111">0.00</div>
<div class="a" style="left:9px;top:695px;width:1170px;height:25px;background:#fff;border:1px solid #c9c9c9;border-top:2px solid #8c8c8c;border-left-color:#9a9a9a"></div>
</body></html>
